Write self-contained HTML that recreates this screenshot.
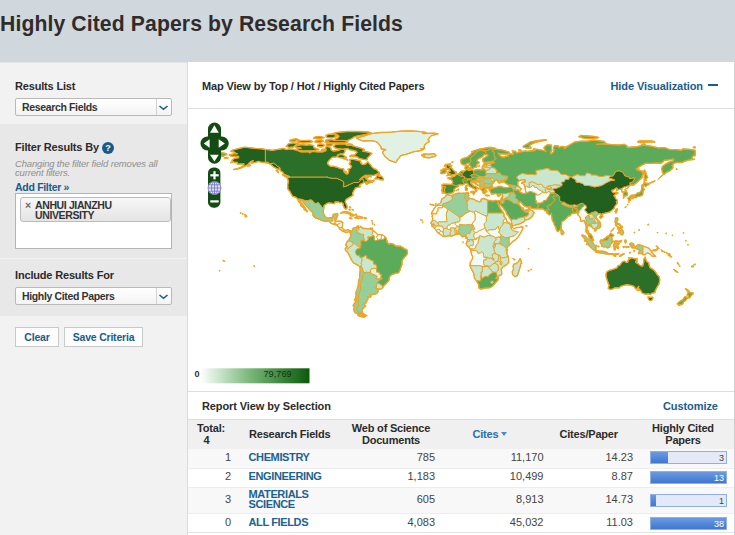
<!DOCTYPE html>
<html><head><meta charset="utf-8">
<style>
*{box-sizing:border-box;margin:0;padding:0}
html,body{width:735px;height:535px;overflow:hidden;background:#f1f1f1;font-family:"Liberation Sans",sans-serif;color:#333}
.abs{position:absolute}
#hdr{left:0;top:0;width:735px;height:62px;background:#d1d8dd}
#title{left:0px;top:11.5px;font-size:21.2px;font-weight:bold;color:#302c2b;white-space:nowrap;letter-spacing:0.1px}
#side{left:0;top:62px;width:187px;height:473px;background:#f2f2f2}
.sec{left:0;width:187px}
.lab{font-size:11px;font-weight:bold;color:#2b2b2b;white-space:nowrap;letter-spacing:-0.17px}
.sel{left:15px;width:157px;height:18px;border:1px solid #b9b9b9;border-radius:2px;background:linear-gradient(#ffffff,#f3f3f3);font-size:10.5px;font-weight:bold;color:#333;line-height:16px;padding-left:6px;white-space:nowrap;letter-spacing:-0.35px}
.sel i{position:absolute;right:0;top:0;width:15px;height:16px;border-left:1px solid #d2d2d2}
.sel svg{position:absolute;right:2px;top:6px}
#panel{left:187px;top:62px;width:548px;height:473px;background:#fff;border-left:1px solid #dadada;border-right:1px solid #cfcfcf}
.hl{left:188px;width:546px;height:1px;background:#dedede}
.b11{font-size:11px;font-weight:bold;white-space:nowrap;letter-spacing:-0.2px}
.blue{color:#1a5c8c}
.btn{top:327px;height:20px;border:1px solid #c9c9c9;background:#fdfdfd;font-size:10.5px;font-weight:bold;color:#1a5c8c;text-align:center;line-height:18px;white-space:nowrap;letter-spacing:-0.2px}
.th{font-size:11px;font-weight:bold;color:#2b2b2b;white-space:nowrap;letter-spacing:-0.2px;line-height:12px;text-align:center}
.fld{left:248.5px;font-size:11px;font-weight:bold;color:#1b6290;white-space:nowrap;letter-spacing:-0.37px;line-height:10px}
.num{font-size:11px;color:#444;white-space:nowrap;text-align:right;width:60px;line-height:12px}
.bar{left:650px;width:77px;height:13px;border:1px solid #8fb0e4;background:#e3e9f6}
.bar b{position:absolute;left:0;top:0;height:11px;background:linear-gradient(#6a9ae2,#3f78cf)}
.bar span{position:absolute;right:2px;top:1px;font-size:9px;line-height:10px}
</style></head><body>
<div id="hdr" class="abs"></div>
<div id="title" class="abs">Highly Cited Papers by Research Fields</div>
<div id="side" class="abs"></div>
<div class="abs" style="left:0;top:62px;width:735px;height:1px;background:#e2e6e9"></div>
<div class="abs sec" style="top:124px;height:192px;background:#e8e8e8"></div>
<div class="abs sec" style="top:258px;height:1px;background:#f3f3f3"></div>
<div class="abs lab" style="left:15px;top:80px">Results List</div>
<div class="abs sel" style="top:98px">Research Fields<i></i><svg width="11" height="6" viewBox="0 0 11 6"><path d="M1.5 1 L5.5 4.3 L9.5 1" fill="none" stroke="#1a5c8c" stroke-width="1.6"/></svg></div>
<div class="abs lab" style="left:15px;top:141px">Filter Results By</div>
<div class="abs" style="left:102px;top:142px;width:12px;height:12px;border-radius:6px;background:#185a8a;color:#fff;font-size:9px;font-weight:bold;text-align:center;line-height:12px">?</div>
<div class="abs" style="left:15px;top:159px;font-size:9.5px;font-style:italic;color:#8f8f8f;line-height:9.3px;white-space:nowrap;letter-spacing:-0.16px">Changing the filter field removes all<br>current filters.</div>
<div class="abs blue" style="left:15px;top:181px;font-size:10.5px;font-weight:bold;white-space:nowrap;letter-spacing:-0.3px">Add Filter »</div>
<div class="abs" style="left:15px;top:193px;width:157px;height:56px;background:#fff;border:1px solid #b4b4b4"></div>
<div class="abs" style="left:20px;top:197px;width:151px;height:25px;border:1px solid #bcbcbc;border-radius:3px;background:linear-gradient(#f7f7f7,#e4e4e4);font-size:10.5px;font-weight:bold;color:#333;line-height:9.6px;padding:3px 0 0 14px;white-space:nowrap;letter-spacing:-0.38px">ANHUI JIANZHU<br>UNIVERSITY<span class="abs" style="left:4px;top:2.5px;color:#6a6a6a;font-size:10.5px;font-weight:bold;letter-spacing:0">×</span></div>
<div class="abs lab" style="left:15px;top:269px">Include Results For</div>
<div class="abs sel" style="top:287px">Highly Cited Papers<i></i><svg width="11" height="6" viewBox="0 0 11 6"><path d="M1.5 1 L5.5 4.3 L9.5 1" fill="none" stroke="#1a5c8c" stroke-width="1.6"/></svg></div>
<div class="abs btn" style="left:15px;width:44px">Clear</div>
<div class="abs btn" style="left:64px;width:79px">Save Criteria</div>

<div id="panel" class="abs"></div>
<div class="abs b11" style="left:202px;top:79.5px;color:#2b2b2b;letter-spacing:-0.15px">Map View by Top / Hot / Highly Cited Papers</div>
<div class="abs b11 blue" style="left:610.5px;top:79.5px;letter-spacing:-0.08px">Hide Visualization</div>
<div class="abs" style="left:707.5px;top:84px;width:10px;height:2px;background:#1a5c8c"></div>
<div class="abs hl" style="top:108px"></div>
<!--MAP--><svg class="abs" style="left:0;top:0" width="735" height="535" viewBox="0 0 735 535"><g stroke="#e8a224" stroke-width="0.95" stroke-linejoin="round"><path fill="#21601f" d="M287.2,177.8L289.2,177.0L289.2,177.0L326.7,177.0L327.3,176.6L327.5,177.4L331.0,178.0L334.2,178.4L336.4,178.1L340.7,180.0L342.4,181.0L343.7,182.0L343.9,185.1L342.9,186.1L343.7,186.8L348.4,185.3L348.3,184.7L349.8,184.3L352.0,183.4L353.8,182.4L358.5,182.4L359.4,181.8L360.5,180.4L361.5,179.2L362.7,179.3L363.4,179.6L363.4,181.3L364.0,182.1L364.5,182.2L362.5,183.3L360.5,184.1L359.5,185.1L359.4,185.7L360.5,186.4L359.7,187.1L358.5,187.2L355.8,187.9L355.1,188.4L354.8,189.6L353.8,190.5L353.6,191.3L352.6,192.9L352.6,193.7L353.1,195.3L351.8,196.1L349.9,197.2L348.2,198.1L346.0,199.6L345.2,201.5L345.5,202.7L346.5,204.6L347.2,206.7L346.9,208.7L345.9,209.2L344.4,207.9L343.1,205.4L343.1,203.8L341.9,202.6L341.3,202.4L339.8,202.8L338.4,201.9L336.4,202.0L334.8,202.0L334.5,203.6L333.0,203.6L331.3,203.1L328.6,202.8L327.3,203.4L325.1,204.6L323.9,205.8L324.0,207.9L321.5,207.2L321.0,205.8L319.6,204.3L318.4,202.8L317.1,202.7L316.1,203.8L314.3,203.0L311.6,200.0L309.3,200.0L309.3,200.7L305.4,200.7L300.5,199.1L297.4,199.1L297.1,198.3L295.7,197.3L294.2,196.7L292.7,196.3L291.0,193.6L290.2,192.0L288.4,189.7L287.6,188.5L287.9,186.7L287.5,185.3L288.2,182.9L288.2,180.6ZM265.4,149.5L262.1,148.8L255.4,148.4L250.7,147.9L244.6,147.2L241.3,147.9L235.9,149.2L231.7,150.4L230.9,151.3L234.6,152.2L235.0,153.0L237.5,153.8L234.6,153.7L229.1,154.9L231.3,156.2L235.9,156.3L238.6,156.3L238.6,157.7L234.6,158.3L232.6,159.7L231.9,160.3L233.3,161.7L234.6,162.5L237.3,162.5L237.3,164.2L242.0,163.9L244.0,163.9L243.3,165.7L240.0,167.7L235.9,169.0L233.5,169.6L237.3,169.0L242.0,167.7L244.6,166.3L248.0,164.6L248.9,163.3L250.7,161.7L253.3,160.7L251.3,163.3L255.4,162.3L258.7,161.3L261.4,162.3L264.7,162.5L267.4,163.0L270.1,164.2L271.4,165.0L272.8,166.3L274.8,167.7L277.5,169.0L278.8,169.3L280.0,168.6L280.1,167.7L277.5,166.3L275.6,164.5L273.4,163.0L270.1,163.8L267.8,162.2L265.4,161.9L265.4,149.5ZM250.4,165.7L247.3,166.1L248.3,165.0L250.0,164.6ZM224.2,157.8L226.6,157.4L228.2,158.1L225.9,158.3ZM231.3,161.9L232.5,162.3L230.6,162.6ZM245.4,217.0L246.7,216.4L246.4,215.5L245.3,215.8ZM244.4,214.6L245.3,214.8L245.0,214.4ZM242.4,213.9L243.0,214.0L242.6,213.5ZM240.4,213.1L240.9,213.2L240.8,212.8Z"/>
<path fill="#2b6f29" d="M265.4,149.5L268.1,149.6L272.1,150.4L276.1,149.6L280.8,149.0L282.8,148.3L286.8,149.6L288.2,149.0L292.2,149.2L297.5,150.3L300.2,151.7L301.6,151.9L306.9,151.8L309.6,151.7L309.6,153.0L312.3,151.3L317.6,151.9L323.0,151.9L324.3,151.0L326.3,151.0L325.7,150.3L325.7,147.0L327.7,146.3L331.0,148.3L331.0,149.6L333.0,151.0L336.4,150.6L339.0,150.3L339.7,149.2L344.4,149.2L345.1,151.0L343.7,153.7L340.4,153.9L337.7,155.0L336.4,157.0L332.4,157.3L329.7,159.7L327.7,162.3L327.7,163.9L330.3,166.3L333.7,166.3L336.4,167.0L340.4,168.6L343.7,168.8L344.0,171.7L345.7,173.7L347.3,174.1L348.4,173.0L348.7,170.4L347.7,169.4L350.4,168.4L351.5,166.3L349.1,163.9L350.4,162.3L349.8,159.3L353.8,159.3L357.8,160.2L360.5,161.0L361.1,163.7L363.1,164.6L365.8,163.9L367.2,162.3L367.7,161.8L370.5,164.7L371.9,167.0L373.9,168.6L376.5,169.7L378.5,171.7L379.5,173.0L377.9,173.8L373.9,175.4L369.8,175.3L365.2,175.4L362.5,177.0L360.5,179.0L359.1,179.8L361.1,178.6L364.5,177.0L367.8,177.0L368.1,177.8L365.8,178.4L367.2,179.7L367.8,180.6L368.8,181.0L371.9,181.4L373.9,180.0L374.1,181.0L372.5,182.1L369.2,182.9L366.5,184.4L365.6,183.3L367.8,182.0L366.5,182.1L364.5,182.2L364.0,182.1L363.4,181.3L363.4,179.6L362.7,179.3L361.5,179.2L360.5,180.4L359.4,181.8L358.5,182.4L353.8,182.4L352.0,183.4L349.8,184.3L348.3,184.7L348.4,185.3L343.7,186.8L342.9,186.1L343.9,185.1L343.7,182.0L342.4,181.0L340.7,180.0L336.4,178.1L334.2,178.4L331.0,178.0L327.5,177.4L327.3,176.6L326.7,177.0L289.2,177.0L289.5,176.6L287.5,175.7L284.1,174.4L282.8,172.4L280.8,171.0L279.7,169.7L280.0,168.6L280.1,167.7L277.5,166.3L275.6,164.5L273.4,163.0L270.1,163.8L267.8,162.2L265.4,161.9L265.4,149.5ZM289.1,177.8L286.2,177.2L282.4,174.8L283.7,174.5L286.6,175.7L288.7,177.2ZM278.5,172.8L276.1,170.4L277.7,170.4L278.1,171.7ZM374.8,178.9L375.9,177.7L377.5,174.8L379.3,173.6L379.9,175.0L378.5,176.0L381.9,176.5L382.6,177.7L383.6,178.9L383.0,180.1L381.2,179.7L379.9,179.8L379.2,178.9ZM367.8,175.8L371.4,176.9L369.8,176.6ZM368.5,180.2L371.2,180.5L370.5,181.0L368.8,180.8ZM371.9,153.4L369.8,155.7L367.2,158.3L367.2,159.8L365.8,159.7L363.1,159.3L359.1,158.3L356.5,156.6L354.4,156.3L350.4,156.6L349.8,156.3L350.4,155.3L355.1,155.0L355.8,153.7L357.1,152.3L355.8,151.0L352.4,150.3L349.1,149.6L348.4,148.6L344.4,149.0L340.4,149.0L337.0,148.6L334.4,147.6L333.7,146.3L335.0,144.7L339.0,143.9L345.7,144.0L346.4,145.2L351.1,145.2L355.1,146.6L358.5,147.4L362.5,148.6L364.5,149.9L362.5,151.0L367.2,151.9L369.8,152.7ZM313.6,150.6L306.9,150.9L302.2,151.0L298.2,150.3L296.9,148.3L301.6,148.2L295.5,147.2L296.2,145.6L301.6,144.6L306.9,145.2L309.6,144.7L313.6,145.6L313.6,147.6L317.6,149.0L319.0,149.6ZM286.2,146.3L289.5,147.5L293.5,147.0L295.5,145.2L298.9,143.9L296.2,143.2L292.2,143.0L288.2,143.9ZM317.6,146.3L321.6,147.0L324.3,145.6L323.6,144.3L319.6,143.9L317.6,145.0ZM326.3,146.0L331.0,145.9L333.0,144.3L331.0,143.6L326.3,143.9ZM321.0,150.3L325.7,150.9L326.3,149.6L323.0,149.1ZM337.7,155.0L341.7,154.3L346.4,157.3L343.1,158.1L339.7,157.7L337.7,157.0ZM325.7,141.6L331.0,142.8L339.0,143.0L347.1,142.7L347.7,141.6L344.4,140.4L335.0,140.4L331.0,139.6L325.7,140.2ZM335.0,140.3L347.1,140.7L351.1,139.0L353.8,137.2L357.8,135.9L365.8,134.6L371.2,132.9L368.5,132.0L357.8,131.5L347.1,131.5L337.7,132.4L332.4,133.6L337.7,135.0L339.0,136.3L337.7,137.9L335.0,139.0ZM327.0,137.6L332.4,137.9L337.0,136.3L333.7,134.0L328.3,134.3L325.7,135.6ZM297.5,142.0L302.9,143.0L309.6,142.6L312.9,141.6L309.6,140.3L304.2,140.6L298.9,140.3ZM314.9,142.0L320.3,142.3L323.6,141.2L321.6,140.0L316.3,140.3ZM289.5,141.0L294.9,141.2L298.9,139.9L296.2,138.8L290.8,139.6ZM313.6,138.3L320.3,138.6L324.3,137.6L320.3,136.6L314.9,137.0ZM325.0,142.3L329.0,142.6L329.0,141.5L325.7,141.4ZM346.4,144.7L351.1,145.1L352.4,144.4L349.1,143.9ZM343.1,158.6L347.1,159.4L345.1,158.5ZM346.7,159.4L348.0,160.1L347.1,160.2ZM344.4,171.6L346.7,172.0L345.7,171.4Z"/>
<path fill="#e1f1e3" d="M395.3,162.5L392.6,161.3L389.3,160.3L387.2,158.3L385.2,156.7L383.9,155.0L382.6,153.0L383.2,151.0L385.9,149.6L381.2,149.0L381.2,147.0L379.9,145.6L378.5,143.6L375.9,141.6L371.2,140.7L363.1,141.0L359.1,139.6L356.5,138.0L363.1,136.3L367.2,135.0L371.2,133.6L380.6,132.5L391.3,132.1L400.6,131.2L411.4,130.8L420.7,131.6L426.1,132.5L422.1,133.5L434.1,133.2L438.1,133.9L431.4,135.6L429.4,137.6L428.1,139.6L429.4,141.6L426.8,143.0L424.7,145.0L424.1,147.0L424.7,148.6L420.7,148.7L423.4,149.6L419.4,151.0L414.0,151.7L410.0,153.0L406.0,154.3L403.3,154.9L400.6,155.7L399.3,157.7L397.3,159.7L396.6,161.7Z"/>
<path fill="#97cf9a" d="M297.4,199.1L300.5,199.1L305.4,200.7L309.3,200.7L309.3,200.0L311.6,200.0L314.3,203.0L316.1,203.8L317.1,202.7L318.4,202.8L319.6,204.3L321.0,205.8L321.5,207.2L324.0,207.9L323.6,209.1L323.2,212.4L323.9,214.4L325.1,216.4L325.9,217.4L327.7,218.2L330.3,217.7L331.7,217.7L332.8,216.4L333.2,214.4L335.7,213.8L337.7,213.8L338.0,214.7L337.0,216.4L336.8,218.1L336.0,217.8L335.3,218.5L334.8,218.7L334.8,218.7L332.4,218.7L332.4,219.5L333.2,221.0L331.4,221.1L330.7,222.1L330.7,223.1L329.0,221.4L327.3,220.9L325.0,221.5L322.3,220.7L320.3,219.9L317.9,218.7L315.6,218.1L313.6,216.4L312.9,215.1L313.2,213.8L312.3,212.2L310.3,210.2L308.5,208.7L307.7,207.1L306.2,205.8L304.9,204.4L303.6,202.8L302.5,200.8L300.6,200.1L300.6,201.8L302.2,203.8L303.6,205.8L305.2,207.8L306.2,209.8L307.6,211.5L306.9,211.9L305.6,210.4L304.0,209.4L303.8,207.8L301.8,206.7L300.5,205.4L301.3,204.4L299.5,202.7L298.5,201.1L297.4,199.1Z"/>
<path fill="#e1f1e3" d="M330.7,223.1L332.4,223.9L333.6,224.1L334.5,223.3L334.8,222.5L336.1,221.5L335.2,221.3L334.8,218.7L332.4,218.7L332.4,219.5L333.2,221.0L331.4,221.1L330.7,222.1Z"/>
<path fill="#ffffff" d="M334.8,218.7L335.3,218.5L336.0,217.8L336.2,219.1L335.2,221.3Z"/>
<path fill="#ffffff" d="M333.6,224.1L335.7,224.9L336.8,224.9L336.6,223.9L334.5,223.3Z"/>
<path fill="#ffffff" d="M334.5,223.3L336.6,223.9L336.8,224.9L337.3,225.1L338.1,224.1L339.7,223.8L340.8,222.7L342.8,222.5L341.1,221.3L339.0,221.1L337.0,221.4L336.1,221.5L334.8,222.5Z"/>
<path fill="#ffffff" d="M337.3,225.1L338.1,224.1L339.7,223.8L340.8,222.7L342.8,222.5L342.4,225.1L342.1,227.8L339.4,227.7L336.8,225.3Z"/>
<path fill="#e1f1e3" d="M339.4,227.7L342.1,227.8L343.6,229.7L343.1,231.4L342.1,231.0L340.4,229.5L339.3,228.9Z"/>
<path fill="#e1f1e3" d="M343.6,229.7L345.7,230.7L347.7,229.7L350.6,230.9L349.9,232.9L348.7,231.4L346.7,232.7L345.1,232.2L343.1,231.4Z"/>
<path fill="#e1f1e3" d="M340.5,213.2L343.1,211.8L346.4,211.5L349.8,212.7L352.7,214.4L354.8,215.4L353.1,215.9L350.2,215.9L350.8,214.8L349.1,213.8L345.7,213.0L343.7,212.3L341.7,213.1Z"/>
<path fill="#ffffff" d="M349.4,217.9L352.0,218.2L352.0,218.6L350.0,218.7Z"/>
<path fill="#ffffff" d="M354.6,217.7L356.5,218.2L358.1,218.5L358.2,216.2L356.1,215.9L357.1,217.1Z"/>
<path fill="#ffffff" d="M358.1,218.5L359.8,218.1L362.5,218.1L362.7,217.4L360.7,216.6L358.2,216.2Z"/>
<path fill="#ffffff" d="M364.2,218.5L366.2,218.5L366.2,217.8L364.2,217.8Z"/>
<path fill="#ffffff" d="M349.4,207.0L350.0,207.1L350.8,207.8L349.9,206.7ZM349.5,209.0L350.2,210.0L349.9,210.4L349.2,209.5ZM352.0,209.4L353.1,210.2L353.4,210.0ZM355.5,214.3L356.3,214.4L356.1,214.0Z"/>
<path fill="#ffffff" d="M371.4,229.0L372.5,229.0L372.5,228.1L371.6,228.2Z"/>
<path fill="#ffffff" d="M371.6,220.7L372.3,220.9L371.9,221.1ZM372.3,222.7L372.7,223.1L372.5,222.6ZM372.4,223.9L372.7,224.2L372.5,223.7ZM374.4,224.9L374.7,225.0L374.5,224.7Z"/>
<path fill="#97cf9a" d="M350.6,230.9L351.4,231.8L352.4,230.1L353.1,228.3L354.0,227.7L356.1,227.4L357.5,226.2L358.7,225.9L357.4,227.5L356.5,229.8L357.4,231.1L357.4,232.9L359.8,233.1L361.3,234.4L363.8,234.2L363.4,236.8L364.1,238.8L364.5,240.9L360.7,240.2L361.4,241.7L360.5,242.2L361.1,243.8L360.5,248.1L359.8,247.6L357.1,245.6L354.4,243.6L353.4,242.6L351.8,242.1L350.0,241.4L348.7,240.6L349.1,239.2L350.4,237.2L350.7,235.2L350.4,233.4L349.9,232.9Z"/>
<path fill="#c9e7ce" d="M364.5,240.9L364.1,238.8L363.4,236.8L363.8,234.2L361.3,234.4L359.8,233.1L357.4,232.9L357.4,231.1L356.5,229.8L357.4,227.5L358.7,225.9L358.3,227.8L359.1,229.8L358.3,230.2L357.9,228.5L359.1,227.5L360.2,227.0L360.7,226.2L361.1,227.1L362.9,227.8L363.1,228.5L365.8,228.3L367.8,229.0L370.5,228.2L370.1,229.1L372.5,229.8L372.8,231.0L373.9,231.1L372.5,232.1L373.2,233.1L372.1,234.5L372.9,235.6L371.9,236.5L369.8,237.2L367.8,237.0L368.5,239.2L366.5,241.2L365.4,241.4L364.5,240.9Z"/>
<path fill="#ffffff" d="M372.9,235.6L372.1,234.5L373.2,233.1L372.5,232.1L373.9,231.1L374.1,231.4L375.9,232.7L377.6,234.6L377.5,235.4L376.5,237.2L377.5,238.1L377.9,240.0L375.5,240.8L374.0,239.4L374.4,237.8L374.1,236.8L374.0,235.8L372.9,235.6Z"/>
<path fill="#ffffff" d="M377.9,240.0L377.5,238.1L376.5,237.2L377.5,235.4L377.6,234.6L379.5,234.6L381.9,234.9L381.2,237.8L381.6,239.6L380.6,239.2L379.2,240.0L377.9,240.0Z"/>
<path fill="#ffffff" d="M381.6,239.6L381.2,237.8L381.9,234.9L383.5,235.4L385.0,237.0L383.4,239.6L381.6,239.6Z"/>
<path fill="#c9e7ce" d="M348.7,240.6L350.0,241.4L351.8,242.1L353.4,242.6L353.1,244.5L351.5,246.0L349.5,247.0L348.8,248.6L347.7,249.2L346.7,248.4L346.7,247.0L347.3,246.2L345.9,245.6L346.0,243.8L346.9,242.5L347.1,241.4Z"/>
<path fill="#c9e7ce" d="M346.7,247.0L346.7,248.4L347.7,249.2L348.8,248.6L349.5,247.0L351.5,246.0L353.1,244.5L353.4,242.6L354.4,243.6L357.1,245.6L359.8,247.6L360.5,248.1L356.7,249.2L355.4,251.9L356.5,254.8L357.4,255.6L359.7,255.2L359.7,257.2L361.0,257.2L362.2,259.2L361.8,261.9L361.1,263.2L361.8,264.5L361.0,265.9L359.9,267.0L358.5,265.6L355.8,264.3L353.5,262.9L352.0,260.9L350.8,258.5L349.5,255.9L348.4,253.5L347.2,251.6L345.5,250.5L345.3,248.5L346.7,247.0Z"/>
<path fill="#c9e7ce" d="M361.0,265.9L361.8,264.5L361.1,263.2L361.8,261.9L362.2,259.2L361.0,257.2L362.5,257.2L365.2,255.7L366.8,255.6L366.8,258.1L369.8,259.3L371.2,260.1L373.2,260.8L373.6,264.1L376.0,264.3L376.1,265.6L377.1,266.5L376.8,267.9L376.3,269.0L375.1,268.3L371.4,268.7L370.8,269.9L370.2,272.2L368.1,273.0L366.9,272.0L364.2,273.0L362.9,271.0L362.5,268.6L361.1,265.9Z"/>
<path fill="#e1f1e3" d="M370.2,272.2L370.8,269.9L371.4,268.7L375.1,268.3L376.3,269.0L376.8,270.2L376.7,272.0L379.5,272.3L380.0,274.6L381.5,274.6L381.1,276.7L381.0,278.0L379.2,279.0L375.7,278.8L377.1,276.6L375.2,275.2L372.5,274.3L370.2,272.2Z"/>
<path fill="#c9e7ce" d="M376.0,287.8L376.3,285.9L377.1,282.8L379.2,283.6L381.2,284.6L382.7,286.3L382.7,287.6L381.9,288.6L380.6,289.1L378.5,289.0L376.8,288.5Z"/>
<path fill="#97cf9a" d="M364.2,273.0L366.9,272.0L368.1,273.0L370.2,272.2L372.5,274.3L375.2,275.2L377.1,276.6L375.7,278.8L379.2,279.0L381.0,278.0L381.1,276.7L382.2,278.2L382.3,278.8L379.6,280.3L377.1,282.8L376.3,285.9L376.0,287.8L375.9,288.3L377.6,289.9L378.3,291.3L376.9,293.5L372.5,294.6L370.9,294.3L370.8,297.0L367.2,297.0L368.1,299.0L366.8,300.6L366.5,302.6L363.8,304.0L365.8,306.0L363.8,308.0L361.8,310.0L362.6,312.4L357.8,312.0L357.4,310.6L356.7,308.6L358.5,305.3L358.2,302.0L358.1,298.6L358.9,294.6L359.8,291.3L360.7,288.2L359.8,285.3L360.7,282.6L362.5,278.6L362.6,275.2L364.2,273.0ZM362.3,312.9L362.3,315.8L365.2,316.0L366.9,315.6L364.5,314.4L362.9,313.2Z"/>
<path fill="#97cf9a" d="M361.1,265.9L359.9,267.0L360.2,269.9L359.7,273.9L359.8,277.2L358.5,281.2L358.3,285.3L357.0,289.9L355.8,292.2L356.1,295.3L355.4,298.3L356.7,298.6L355.8,301.3L354.4,303.3L353.1,305.3L354.4,307.3L353.4,310.0L355.1,312.6L358.5,314.4L359.3,313.3L360.5,312.6L362.6,312.4L357.8,312.0L357.4,310.6L356.7,308.6L358.5,305.3L358.2,302.0L358.1,298.6L358.9,294.6L359.8,291.3L360.7,288.2L359.8,285.3L360.7,282.6L362.5,278.6L362.6,275.2L364.2,273.0L362.9,271.0L362.5,268.6L361.1,265.9ZM362.3,312.9L360.1,313.0L359.8,314.6L357.8,315.3L360.5,316.4L362.3,315.8ZM355.1,298.5L355.8,298.3L355.6,300.5L354.6,300.2ZM363.4,316.2L364.5,317.2L361.5,316.8Z"/>
<path fill="#5bab5b" d="M385.0,237.0L383.4,239.6L381.6,239.6L380.6,239.2L379.2,240.0L377.9,240.0L375.5,240.8L374.0,239.4L374.4,237.8L374.1,236.8L374.0,235.8L372.9,235.6L371.9,236.5L369.8,237.2L367.8,237.0L368.5,239.2L366.5,241.2L365.4,241.4L364.5,240.9L360.7,240.2L361.4,241.7L360.5,242.2L361.1,243.8L360.5,248.1L356.7,249.2L355.4,251.9L356.5,254.8L357.4,255.6L359.7,255.2L359.7,257.2L361.0,257.2L362.5,257.2L365.2,255.7L366.8,255.6L366.8,258.1L369.8,259.3L371.2,260.1L373.2,260.8L373.6,264.1L376.0,264.3L376.1,265.6L377.1,266.5L376.8,267.9L376.3,269.0L376.8,270.2L376.7,272.0L379.5,272.3L380.0,274.6L381.5,274.6L381.1,276.7L382.2,278.2L382.3,278.8L379.6,280.3L377.1,282.8L379.2,283.6L381.2,284.6L382.7,286.3L382.7,287.6L384.3,285.3L386.6,283.2L388.9,280.6L389.3,277.9L389.9,276.2L391.9,274.6L393.9,273.9L396.0,273.2L398.0,273.1L399.3,271.9L400.2,269.6L401.0,266.9L402.0,264.5L402.0,261.2L402.6,259.9L404.3,257.5L406.0,255.9L407.3,253.9L407.6,252.1L406.9,249.6L404.7,248.9L402.6,247.4L400.6,246.2L398.0,246.2L395.3,245.8L394.5,244.8L392.6,243.8L389.9,243.4L389.3,244.5L387.9,242.8L386.8,242.1L387.2,241.2L386.6,239.8L385.9,237.8L385.0,237.0Z"/>
<path fill="#c9e7ce" d="M421.4,155.0L424.1,153.8L427.4,154.2L430.1,154.1L432.8,153.7L434.8,153.9L436.1,155.7L434.1,156.6L429.4,157.8L426.8,157.7L423.8,157.3L424.7,156.3L422.1,155.8L424.7,155.3Z"/>
<path fill="#2b6f29" d="M446.6,175.7L449.5,175.4L452.2,174.8L456.1,174.2L455.5,173.3L456.5,172.1L454.6,171.7L454.2,170.9L452.6,169.6L452.1,168.4L450.9,167.7L449.8,167.7L451.4,166.2L451.8,165.5L449.5,165.4L448.6,165.7L450.2,164.2L447.5,164.2L446.4,165.7L445.9,166.7L446.6,168.6L447.8,168.4L447.6,169.4L449.5,169.2L449.9,170.4L450.2,171.2L448.2,171.3L448.4,172.0L448.7,172.6L447.2,173.2L449.9,173.8L450.6,173.7L448.6,174.1ZM443.5,169.7L444.4,168.8L446.2,168.8L446.8,169.7L445.9,170.4L444.2,170.2ZM444.4,166.1L445.9,165.9L445.8,164.3L444.8,165.0ZM452.1,162.3L452.9,162.1L452.6,161.4L452.1,161.8ZM449.8,163.8L450.6,163.7L450.0,163.4Z"/>
<path fill="#5bab5b" d="M440.8,173.6L442.8,173.7L445.6,172.8L446.2,171.7L445.9,170.4L444.2,170.2L443.5,169.7L444.4,168.8L442.8,169.0L442.8,170.0L440.8,170.1L441.5,171.3L440.8,172.4Z"/>
<path fill="#3f8f40" d="M447.8,177.8L450.2,177.3L452.1,177.6L451.8,176.1L454.5,176.4L456.3,174.5L457.5,174.2L459.8,175.7L462.0,176.4L462.8,176.4L465.2,177.0L464.4,178.9L463.6,179.2L462.4,180.2L462.2,180.8L463.6,181.2L463.0,182.2L464.5,183.6L464.2,184.0L462.5,184.9L460.6,184.5L458.4,184.9L458.5,185.9L455.1,185.5L451.8,184.5L452.6,182.8L452.7,181.6L451.3,179.6L448.3,178.6ZM465.7,185.9L466.8,185.1L466.9,186.4L466.5,187.2L465.8,186.7Z"/>
<path fill="#3f8f40" d="M451.8,184.5L455.1,185.5L458.5,185.9L458.5,186.5L455.4,188.0L453.8,189.9L454.5,190.7L453.3,192.3L451.4,193.3L448.2,193.5L446.7,194.4L445.8,193.3L444.3,192.8L444.8,191.5L444.4,189.7L445.0,187.7L445.9,186.9L445.4,186.5L443.2,186.4L442.3,186.5L441.7,185.1L443.5,184.1L446.8,184.3L449.5,184.4ZM457.4,189.7L458.5,189.2L458.6,189.9L457.9,190.0ZM455.9,190.5L456.3,190.3L456.2,190.7ZM430.1,204.2L430.4,204.4L430.2,203.9ZM431.6,204.7L432.5,204.4L432.1,205.1ZM433.0,205.0L433.6,205.4L433.6,204.8ZM435.1,205.1L435.6,204.2L436.1,203.5L435.6,204.7Z"/>
<path fill="#5bab5b" d="M442.3,186.5L443.2,186.4L445.4,186.5L445.9,186.9L445.0,187.7L444.4,189.7L444.8,191.5L444.3,192.8L442.3,193.1L442.4,191.1L441.5,190.7L442.3,188.8Z"/>
<path fill="#3f8f40" d="M457.5,174.2L458.8,173.8L460.0,173.8L460.9,173.7L462.0,174.1L462.2,174.6L462.8,175.3L462.4,175.6L462.8,176.4L462.0,176.4L459.8,175.7Z"/>
<path fill="#3f8f40" d="M458.8,173.8L459.6,173.0L460.5,171.7L461.6,171.2L463.4,171.2L463.8,171.4L463.6,172.6L462.2,173.2L462.2,174.6L462.0,174.1L460.9,173.7L460.0,173.8Z"/>
<path fill="#2b6f29" d="M462.2,174.6L462.2,173.2L463.6,172.6L463.8,171.4L463.4,171.2L464.9,170.8L465.7,170.4L465.7,169.2L467.5,169.3L467.6,169.8L468.9,169.8L468.9,170.4L470.9,169.8L472.3,169.7L473.2,170.5L473.5,171.3L473.9,172.9L474.3,174.4L473.3,174.4L470.7,175.3L470.9,175.8L472.7,177.3L471.6,178.0L471.6,179.0L470.3,178.9L468.3,179.0L467.1,179.0L464.4,178.9L465.2,177.0L462.8,176.4L462.4,175.6L462.8,175.3Z"/>
<path fill="#3f8f40" d="M462.2,180.8L463.6,181.2L464.9,181.0L466.3,181.3L468.1,180.2L468.3,179.8L467.1,179.0L464.4,178.9L463.6,179.2L462.4,180.2Z"/>
<path fill="#5bab5b" d="M467.1,179.0L468.3,179.0L470.3,178.9L471.6,179.0L471.6,178.0L472.7,177.3L474.3,177.0L477.0,177.6L477.1,178.4L476.3,179.7L475.6,180.1L473.6,180.5L472.5,180.4L470.8,180.1L468.3,179.8Z"/>
<path fill="#3f8f40" d="M464.2,184.0L464.5,183.6L463.0,182.2L463.6,181.2L464.9,181.0L466.3,181.3L468.1,180.2L468.3,179.8L470.8,180.1L472.5,180.4L472.7,181.6L470.7,182.0L470.8,183.4L472.4,184.4L473.2,185.9L475.6,186.5L479.0,188.9L477.0,188.4L476.4,189.5L477.1,190.4L475.8,191.9L475.2,191.5L475.9,190.4L475.1,189.1L473.6,188.3L471.6,187.5L470.5,186.7L468.9,185.9L468.3,185.1L467.7,183.7L466.0,183.2L464.9,183.8ZM470.8,191.7L472.0,191.5L475.1,191.3L474.4,193.5L470.9,192.3ZM465.2,187.7L466.5,187.5L467.3,188.4L467.1,190.1L466.1,190.5L465.4,190.1L465.4,188.4Z"/>
<path fill="#5bab5b" d="M465.7,169.2L465.0,168.4L465.2,166.6L465.7,166.2L468.4,165.4L468.0,167.0L468.8,167.4L467.5,168.6L467.5,169.3ZM469.1,168.1L470.9,167.7L471.1,168.5L470.3,169.2L468.9,168.8ZM467.3,168.4L468.7,168.4L468.5,168.9L467.6,168.9Z"/>
<path fill="#5bab5b" d="M463.6,165.0L461.6,163.9L460.9,162.3L460.9,160.3L461.2,159.4L463.6,158.3L465.6,157.7L467.6,157.0L468.9,155.8L470.9,154.3L471.6,153.0L473.6,151.9L471.6,151.7L475.0,150.6L477.6,149.6L479.6,149.0L483.0,148.6L485.7,147.9L488.7,147.4L491.7,147.5L495.7,148.4L494.4,149.4L495.4,149.2L493.0,150.3L491.7,149.0L489.0,149.1L488.6,150.3L485.7,150.7L481.8,150.2L478.4,151.0L476.3,151.9L475.0,154.1L473.6,155.3L472.5,156.3L470.5,157.7L470.5,160.1L471.3,160.6L470.5,161.7L470.0,162.6L469.5,163.7L468.9,163.5L468.4,163.0L466.9,163.9L465.2,164.9Z"/>
<path fill="#5bab5b" d="M469.5,163.7L469.2,164.6L470.1,165.5L471.1,167.3L471.6,168.5L473.3,168.4L473.7,167.6L475.6,167.4L476.3,166.3L476.7,164.6L478.3,163.7L479.4,162.6L478.7,161.7L477.2,161.4L477.4,159.7L479.0,158.3L481.6,157.3L483.0,156.2L484.1,154.7L486.5,154.6L485.9,153.7L486.1,152.3L485.0,151.4L481.8,150.2L478.4,151.0L476.3,151.9L475.0,154.1L473.6,155.3L472.5,156.3L470.5,157.7L470.5,160.1L471.3,160.6L470.5,161.7L470.0,162.6L469.5,163.7ZM478.6,166.3L479.6,165.1L479.4,165.9ZM476.2,167.4L477.1,165.9L476.6,166.9Z"/>
<path fill="#5bab5b" d="M486.5,154.6L488.1,155.5L487.0,156.3L484.3,157.8L482.7,159.0L483.0,161.0L482.7,161.5L484.9,162.5L487.7,162.1L491.4,161.7L493.4,160.6L496.4,158.5L494.4,157.3L494.4,155.9L494.0,154.3L494.4,152.1L492.4,151.4L492.4,150.4L493.0,150.3L491.7,149.0L489.0,149.1L488.6,150.3L485.7,150.7L481.8,150.2L485.0,151.4L486.1,152.3L485.9,153.7Z"/>
<path fill="#c9e7ce" d="M485.7,163.4L487.0,163.0L491.7,163.0L490.9,163.9L491.0,165.7L489.7,165.5L487.7,165.0L486.7,165.1L487.0,164.5L485.7,164.1ZM483.7,164.2L485.3,164.2L484.5,165.0L483.5,164.6ZM483.9,163.7L485.0,163.7L484.5,163.9Z"/>
<path fill="#c9e7ce" d="M486.7,165.1L487.7,165.0L489.7,165.5L491.0,165.7L492.0,167.4L489.8,168.1L487.7,167.3L483.7,167.1L482.3,167.6L482.3,166.3L483.3,165.5L484.5,165.4L485.3,166.3L486.3,166.2Z"/>
<path fill="#c9e7ce" d="M482.3,167.6L483.7,167.1L487.7,167.3L489.8,168.1L489.8,168.8L488.6,170.0L486.3,170.5L485.7,170.4L484.7,169.8L484.6,169.2L482.6,168.6Z"/>
<path fill="#5bab5b" d="M473.2,170.5L476.3,169.7L479.0,169.3L480.6,169.8L484.7,169.8L485.7,170.4L486.2,172.1L485.8,173.0L485.8,173.6L486.5,174.6L484.6,176.8L484.3,176.9L482.3,176.5L480.3,176.5L479.4,176.4L477.0,175.3L475.6,174.9L474.3,174.4L473.9,172.9L473.5,171.3Z"/>
<path fill="#5bab5b" d="M470.7,175.3L473.3,174.4L474.3,174.4L475.6,174.9L477.0,175.3L479.4,176.4L477.0,177.6L474.3,177.0L472.7,177.3L470.9,175.8Z"/>
<path fill="#97cf9a" d="M477.0,177.6L479.4,176.4L480.3,176.5L482.3,176.5L484.3,176.9L483.8,177.8L481.6,177.7L479.4,178.6L477.1,178.4Z"/>
<path fill="#97cf9a" d="M475.6,180.1L476.3,179.7L477.1,178.4L479.4,178.6L481.6,177.7L483.8,177.8L484.9,178.4L482.6,180.6L481.4,180.9L479.4,181.2L477.0,181.0L476.2,180.4Z"/>
<path fill="#97cf9a" d="M484.9,178.4L487.0,178.5L489.8,178.0L492.0,180.4L492.0,181.7L494.0,182.0L492.5,184.1L490.4,183.6L488.3,184.1L484.6,183.4L484.3,182.8L482.9,182.6L481.4,180.9L482.6,180.6Z"/>
<path fill="#e1f1e3" d="M489.8,178.0L491.7,178.0L493.3,178.5L494.5,180.5L492.0,181.7L492.0,180.4Z"/>
<path fill="#97cf9a" d="M484.6,183.4L488.3,184.1L490.4,183.6L492.5,184.1L491.7,186.4L489.5,186.8L489.0,187.3L487.0,187.2L485.0,187.3L484.2,186.0L484.3,184.8Z"/>
<path fill="#5bab5b" d="M481.0,189.5L482.3,188.0L485.0,187.3L487.0,187.2L489.0,187.3L489.5,186.8L489.0,188.0L486.3,188.0L486.7,188.9L484.9,188.5L484.5,189.7L485.4,190.5L486.3,191.5L486.3,192.1L485.3,191.9L485.3,192.7L484.7,193.7L484.2,193.9L483.3,193.3L482.7,192.0L484.3,191.5L482.5,191.3L481.9,190.5ZM485.7,195.1L487.0,195.2L489.4,195.5L487.4,195.9L485.7,195.5ZM491.3,194.1L492.0,193.9L491.7,194.5ZM489.0,190.0L489.8,190.3L489.3,190.5ZM485.5,190.5L486.6,190.9L487.0,191.7L485.7,190.9Z"/>
<path fill="#c9e7ce" d="M480.2,186.5L480.0,188.5L481.0,189.5L482.3,188.0L481.6,186.7L481.0,185.6Z"/>
<path fill="#c9e7ce" d="M481.6,186.7L482.3,188.0L485.0,187.3L484.2,186.0L483.0,186.0Z"/>
<path fill="#5bab5b" d="M472.5,180.4L472.7,181.6L474.6,181.7L476.2,180.4L475.6,180.1L473.6,180.5Z"/>
<path fill="#97cf9a" d="M472.3,181.7L472.7,181.6L474.6,181.7L476.2,180.4L477.0,181.0L479.4,181.2L479.6,182.5L477.0,182.1L475.4,182.1L475.9,183.4L477.6,184.8L479.0,185.9L476.3,184.4L474.6,183.4L473.6,182.1L472.8,182.6Z"/>
<path fill="#c9e7ce" d="M475.4,182.1L477.0,182.1L479.6,182.5L480.2,183.7L479.9,184.4L479.0,185.6L479.0,185.9L477.6,184.8L475.9,183.4Z"/>
<path fill="#c9e7ce" d="M479.0,185.9L479.0,185.6L479.9,184.4L481.4,185.3L481.0,185.6L480.2,186.5Z"/>
<path fill="#97cf9a" d="M479.6,182.5L479.4,181.2L481.4,180.9L482.9,182.6L484.3,182.8L484.6,183.4L484.3,184.8L484.2,186.0L483.0,186.0L481.6,186.7L481.0,185.6L481.4,185.3L479.9,184.4L480.2,183.7Z"/>
<path fill="#c9e7ce" d="M485.7,170.4L486.3,170.5L488.6,170.0L489.8,168.8L489.8,168.1L492.0,167.4L495.6,168.2L495.4,169.3L497.7,171.0L496.4,171.6L496.8,172.9L495.2,173.8L491.0,173.7L485.8,173.6L485.8,173.0L486.2,172.1Z"/>
<path fill="#97cf9a" d="M483.8,177.8L484.3,176.9L484.6,176.8L486.5,174.6L485.8,173.6L491.0,173.7L495.2,173.8L496.8,172.9L499.5,172.5L501.7,175.2L505.1,175.8L507.9,176.2L507.5,178.5L505.3,179.6L503.1,180.1L501.1,180.8L501.3,181.7L503.2,181.8L501.1,182.4L499.1,183.2L497.7,181.8L499.2,180.9L496.8,180.2L495.3,180.4L494.0,182.0L492.0,181.7L494.5,180.5L493.3,178.5L491.7,178.0L489.8,178.0L487.0,178.5L484.9,178.4Z"/>
<path fill="#97cf9a" d="M497.4,195.7L498.4,195.2L500.5,194.8L499.7,195.7L498.4,196.3Z"/>
<path fill="#ffffff" d="M473.3,194.4L473.7,194.5L473.5,194.7Z"/>
<path fill="#5bab5b" d="M489.5,186.8L491.7,186.4L493.0,187.5L491.0,187.7L489.3,188.7L489.0,188.0ZM489.3,189.1L489.1,189.7L490.1,191.1L490.8,193.1L492.1,193.5L493.7,194.1L495.2,193.3L497.7,194.3L499.7,194.0L502.1,193.6L502.4,194.5L503.3,194.0L503.7,193.5L506.4,193.5L509.1,192.9L510.8,192.8L514.2,192.8L513.1,189.9L514.2,189.5L512.7,188.9L512.4,187.6L511.1,187.1L509.8,187.1L507.4,187.7L503.7,187.5L501.1,186.4L498.4,186.4L496.1,187.5L493.3,187.5L493.7,188.1L491.0,188.5Z"/>
<path fill="#c9e7ce" d="M446.3,194.7L447.1,194.5L451.3,195.6L451.9,196.4L452.6,199.1L450.2,201.1L449.4,201.4L446.8,202.7L442.6,204.2L442.6,205.5L436.5,205.5L438.8,204.0L440.8,202.7L441.2,201.1L441.7,199.1L444.2,197.6L445.5,196.7Z"/>
<path fill="#f3f9f3" d="M436.5,205.5L442.6,205.5L442.6,207.8L438.1,207.8L438.1,211.2L436.8,211.8L436.8,214.0L431.4,214.0L431.6,213.1L432.8,210.7L434.2,208.4L434.9,207.4Z"/>
<path fill="#97cf9a" d="M451.3,195.6L454.2,194.5L456.2,193.7L458.2,193.2L461.6,193.3L464.2,193.1L465.7,193.2L465.3,195.7L464.2,197.1L465.3,198.4L466.3,199.7L466.9,202.2L467.5,205.1L467.3,207.1L467.6,209.8L470.1,211.1L464.2,214.6L462.2,216.4L459.8,216.8L458.6,217.1L458.2,215.9L456.6,215.1L447.8,209.1L442.6,206.0L442.6,204.2L446.8,202.7L449.4,201.4L450.2,201.1L452.6,199.1L451.9,196.4Z"/>
<path fill="#97cf9a" d="M465.7,193.2L467.3,192.7L468.9,193.1L468.3,194.4L468.9,195.7L467.7,196.7L469.1,198.0L469.6,198.1L469.6,199.2L468.0,200.0L467.6,201.8L466.9,202.2L466.3,199.7L465.3,198.4L464.2,197.1L465.3,195.7Z"/>
<path fill="#c9e7ce" d="M469.6,198.1L470.9,198.7L474.6,199.3L475.2,200.5L477.6,201.2L479.6,202.0L481.0,201.1L481.1,199.3L483.0,198.5L485.1,198.9L487.8,200.3L487.7,203.5L487.7,213.1L487.7,215.8L486.3,215.8L486.3,216.4L475.6,211.1L474.3,211.8L473.2,212.3L470.1,211.1L467.6,209.8L467.3,207.1L467.5,205.1L466.9,202.2L467.6,201.8L468.0,200.0L469.6,199.2Z"/>
<path fill="#5bab5b" d="M487.8,200.3L490.4,200.5L493.0,201.2L495.7,200.4L497.4,200.8L500.1,200.7L500.9,203.1L500.1,205.4L499.1,204.4L497.9,202.6L497.9,203.8L499.1,205.8L500.4,208.4L502.0,210.6L503.6,213.1L496.4,213.1L487.7,213.1L487.7,203.5Z"/>
<path fill="#c9e7ce" d="M487.7,213.1L503.6,213.1L504.1,214.4L504.0,216.4L505.9,218.5L503.7,219.8L503.1,222.5L503.1,223.4L502.7,225.4L501.3,226.5L500.0,228.1L499.6,229.5L498.4,228.9L498.5,226.5L497.6,226.5L495.7,229.4L491.7,229.9L489.7,229.8L487.4,230.7L485.8,230.7L485.7,229.1L484.9,227.8L484.3,225.4L483.8,224.1L484.3,223.5L486.3,221.5L486.3,216.4L486.3,215.8L487.7,215.8Z"/>
<path fill="#f3f9f3" d="M485.8,230.7L487.4,230.7L489.7,229.8L491.7,229.9L495.7,229.4L497.6,226.5L498.5,226.5L498.4,228.9L499.6,229.5L499.9,231.1L498.4,231.9L499.7,233.4L501.5,235.3L499.7,236.9L495.7,237.6L495.4,237.8L493.7,236.5L491.0,235.8L489.5,234.5L488.1,232.7L487.0,231.8Z"/>
<path fill="#f3f9f3" d="M505.9,218.5L507.1,221.8L509.4,223.1L511.9,225.5L511.0,225.8L508.8,223.5L506.4,222.9L504.9,222.6L503.1,223.4L503.1,222.5L503.7,219.8Z"/>
<path fill="#e1f1e3" d="M511.9,225.5L512.2,227.1L511.5,227.8L510.2,227.8L511.0,225.8Z"/>
<path fill="#c9e7ce" d="M503.1,223.4L504.9,222.6L506.4,222.9L508.8,223.5L511.0,225.8L510.2,227.8L511.5,227.8L511.8,229.8L513.1,230.5L517.1,231.8L518.5,231.8L514.5,235.8L511.8,236.5L510.4,236.9L509.1,237.3L507.1,237.8L505.1,237.7L502.4,236.6L501.5,235.3L499.7,233.4L498.4,231.9L499.9,231.1L499.6,229.5L500.0,228.1L501.3,226.5L502.7,225.4Z"/>
<path fill="#f3f9f3" d="M512.2,227.1L513.8,228.6L517.1,227.5L519.8,227.4L522.6,226.6L522.9,228.5L522.2,229.9L520.9,232.5L518.5,236.5L515.8,239.6L513.1,241.2L510.4,243.8L509.9,244.8L509.1,243.6L509.1,238.8L509.1,237.3L510.4,236.9L511.8,236.5L514.5,235.8L518.5,231.8L517.1,231.8L513.1,230.5L511.8,229.8L511.5,227.8Z"/>
<path fill="#97cf9a" d="M499.7,236.9L501.5,235.3L502.4,236.6L505.1,237.7L507.1,237.8L509.1,237.3L509.1,238.8L509.1,243.6L509.9,244.8L508.0,246.1L506.7,248.8L504.7,247.2L504.5,246.5L499.7,243.8L499.6,242.4L500.4,240.9L501.1,240.1Z"/>
<path fill="#c9e7ce" d="M495.7,237.6L499.7,236.9L501.1,240.1L500.4,240.9L499.6,242.4L499.7,243.8L495.0,243.8L493.8,244.4L494.0,242.5L494.4,241.2L496.1,239.6L495.4,237.8Z"/>
<path fill="#c9e7ce" d="M499.7,243.8L504.5,246.5L504.7,247.2L506.7,248.8L506.2,250.5L507.1,251.9L506.8,253.9L508.3,256.4L505.1,257.6L501.1,258.0L500.4,257.2L499.7,255.2L498.3,255.1L495.7,254.0L495.4,253.5L494.4,251.2L493.6,248.5L495.0,247.2L495.4,245.7L495.0,243.8ZM506.7,250.2L507.2,250.8L506.8,251.1ZM507.4,249.2L507.6,249.6L507.4,249.7Z"/>
<path fill="#c9e7ce" d="M493.8,244.4L495.0,243.8L495.4,245.7L493.0,246.1L493.3,244.8Z"/>
<path fill="#e1f1e3" d="M493.0,246.1L495.4,245.7L495.0,247.2L493.6,248.5L493.3,247.2Z"/>
<path fill="#c9e7ce" d="M470.5,250.2L470.9,249.2L471.6,248.6L473.5,248.9L475.5,247.8L475.9,245.2L478.0,243.2L478.2,241.2L479.1,237.8L479.1,235.8L480.3,235.7L484.2,237.0L488.1,235.4L491.0,235.8L493.7,236.5L495.4,237.8L496.1,239.6L494.4,241.2L494.0,242.5L493.8,244.4L493.3,244.8L493.0,246.1L493.3,247.2L493.6,248.5L494.4,251.2L495.4,253.5L492.9,253.9L492.2,254.9L492.5,256.5L492.2,258.4L494.1,258.8L494.1,260.4L492.2,259.2L490.6,258.0L489.0,258.4L487.0,257.7L486.2,257.1L483.9,257.5L483.4,255.2L483.5,253.2L481.6,251.9L480.3,253.1L477.8,253.3L476.4,250.4L471.6,250.4Z"/>
<path fill="#f3f9f3" d="M469.1,247.7L470.0,248.6L470.3,249.2L470.9,249.2L471.6,248.6L473.5,248.9L475.5,247.8L475.9,245.2L478.0,243.2L478.2,241.2L479.1,237.8L476.3,237.8L475.9,239.6L473.6,239.6L472.0,239.6L471.9,240.9L473.3,240.8L473.6,243.2L472.8,245.7L470.9,245.4L469.7,246.2Z"/>
<path fill="#c9e7ce" d="M467.3,241.2L469.3,241.2L469.3,239.6L472.0,239.6L471.9,240.9L473.3,240.8L473.6,243.2L472.8,245.7L470.9,245.4L469.7,246.2L469.1,247.7L467.1,245.7L466.0,243.6L466.9,242.2Z"/>
<path fill="#e1f1e3" d="M467.3,241.2L469.3,241.2L469.3,239.6L467.3,239.4ZM465.6,238.1L466.1,237.6L465.8,238.2Z"/>
<path fill="#ffffff" d="M462.9,242.4L463.3,242.1L463.0,242.0Z"/>
<path fill="#c9e7ce" d="M467.3,239.4L469.3,239.6L472.0,239.6L473.6,239.6L475.9,239.6L474.3,237.4L473.6,235.8L475.0,232.5L472.7,229.5L475.0,229.1L473.2,225.4L473.1,225.1L472.7,227.8L470.7,231.1L469.6,233.7L467.9,233.3L466.0,234.8L465.6,236.2L466.9,237.2L467.3,238.1Z"/>
<path fill="#f3f9f3" d="M475.9,239.6L476.3,237.8L479.1,237.8L479.1,235.8L480.3,235.7L484.2,237.0L488.1,235.4L491.0,235.8L489.5,234.5L488.1,232.7L487.0,231.8L485.8,230.7L485.7,229.1L484.9,227.8L482.3,229.4L479.6,230.5L477.0,232.2L475.0,232.5L473.6,235.8L474.3,237.4Z"/>
<path fill="#f3f9f3" d="M473.1,225.1L473.2,225.4L475.0,229.1L472.7,229.5L475.0,232.5L477.0,232.2L479.6,230.5L482.3,229.4L484.9,227.8L484.3,225.4L483.8,224.1L484.3,223.5L486.3,221.5L486.3,216.4L475.6,211.1L474.3,211.8L475.1,215.8L475.0,220.1L472.4,223.1L472.3,224.3Z"/>
<path fill="#f3f9f3" d="M454.5,222.5L455.5,224.6L457.1,226.5L457.9,226.1L459.0,226.9L459.6,224.5L463.3,224.9L465.6,225.1L468.3,224.7L470.9,225.0L472.3,224.3L472.4,223.1L475.0,220.1L475.1,215.8L474.3,211.8L473.2,212.3L470.1,211.1L464.2,214.6L462.2,216.4L459.8,216.8L459.8,220.5L458.9,221.8L456.2,222.1Z"/>
<path fill="#97cf9a" d="M457.8,233.9L457.9,230.5L459.0,229.1L459.0,226.9L459.6,224.5L463.3,224.9L465.6,225.1L468.3,224.7L470.9,225.0L472.3,224.3L473.1,225.1L472.7,227.8L470.7,231.1L469.6,233.7L467.9,233.3L466.0,234.8L465.6,236.2L463.6,236.6L462.2,236.8L460.9,235.0L460.1,234.1Z"/>
<path fill="#c9e7ce" d="M456.3,234.2L457.8,233.9L457.9,230.5L459.0,229.1L459.0,226.9L457.9,226.1L457.1,226.5L455.5,227.8L455.3,228.7L456.3,230.5Z"/>
<path fill="#f3f9f3" d="M455.8,234.4L456.3,234.2L456.3,230.5L455.3,228.7L454.2,227.8L454.9,229.8L454.9,232.5Z"/>
<path fill="#c9e7ce" d="M450.0,235.7L451.5,236.2L455.8,234.4L454.9,232.5L454.9,229.8L454.2,227.8L450.5,227.8L450.6,229.8L450.9,231.5L449.9,233.4Z"/>
<path fill="#f3f9f3" d="M446.8,228.6L448.2,229.5L450.6,229.8L450.5,227.8L454.2,227.8L455.3,228.7L455.5,227.8L457.1,226.5L455.5,224.6L454.5,222.5L451.5,223.5L449.5,224.9L448.3,224.9L447.1,226.7Z"/>
<path fill="#c9e7ce" d="M444.2,236.6L450.0,235.7L449.9,233.4L450.9,231.5L450.6,229.8L448.2,229.5L446.8,228.6L445.9,228.2L443.5,228.9L443.1,231.1L443.1,232.3L444.0,233.1L442.8,233.8L444.2,235.8Z"/>
<path fill="#f3f9f3" d="M438.8,233.3L442.1,235.8L444.2,236.6L444.2,235.8L442.8,233.8L444.0,233.1L443.1,232.3L441.6,231.3L440.4,231.3Z"/>
<path fill="#f3f9f3" d="M436.4,230.5L437.5,232.6L438.8,233.3L440.4,231.3L440.0,230.1L439.2,229.1L437.5,229.3Z"/>
<path fill="#f3f9f3" d="M434.1,227.8L436.4,230.5L437.5,229.3L439.2,229.1L440.0,230.1L440.4,231.3L441.6,231.3L443.1,232.3L443.1,231.1L443.5,228.9L443.1,227.8L442.1,225.9L438.9,225.9L435.9,225.7L435.9,226.9Z"/>
<path fill="#e1f1e3" d="M431.8,226.1L434.1,227.8L435.9,226.9L435.9,225.7L433.4,225.7Z"/>
<path fill="#c9e7ce" d="M431.8,226.1L433.4,225.7L435.9,225.7L438.9,225.9L437.9,222.9L434.8,220.3L432.1,221.0L430.8,222.9L431.7,224.3L434.1,224.1L434.1,224.7L431.7,225.0Z"/>
<path fill="#f3f9f3" d="M431.4,214.0L436.8,214.0L436.8,211.8L438.1,211.2L438.1,207.8L442.6,207.8L442.6,206.0L447.8,209.1L446.3,214.4L446.8,220.5L447.1,221.8L441.7,221.8L438.8,221.7L437.9,222.9L434.8,220.3L432.1,221.0L432.8,218.5L432.1,216.6L432.5,215.4Z"/>
<path fill="#c9e7ce" d="M437.9,222.9L438.8,221.7L441.7,221.8L447.1,221.8L446.8,220.5L446.3,214.4L447.8,209.1L456.6,215.1L458.2,215.9L458.6,217.1L459.8,216.8L459.8,220.5L458.9,221.8L456.2,222.1L454.5,222.5L451.5,223.5L449.5,224.9L448.3,224.9L447.1,226.7L446.8,228.6L445.9,228.2L443.5,228.9L443.1,227.8L442.1,225.9L438.9,225.9Z"/>
<path fill="#ffffff" d="M421.7,220.3L422.2,220.1L422.1,220.5ZM422.5,222.5L422.9,222.2L422.7,222.6ZM420.5,219.8L420.9,219.7L420.7,219.9Z"/>
<path fill="#f3f9f3" d="M470.5,250.2L471.6,250.4L476.4,250.4L477.8,253.3L480.3,253.1L481.6,251.9L483.5,253.2L483.4,255.2L483.9,257.5L486.2,257.1L486.3,259.9L483.7,259.9L483.7,264.1L485.5,266.0L482.9,266.5L479.0,265.7L472.9,265.7L470.0,265.6L470.3,262.5L472.3,259.2L472.7,256.8L471.6,254.5L470.7,250.6ZM470.3,249.2L470.9,249.2L471.6,248.6L470.5,250.2Z"/>
<path fill="#c9e7ce" d="M483.7,259.9L486.3,259.9L486.2,257.1L487.0,257.7L489.0,258.4L490.6,258.0L492.2,259.2L494.1,260.4L494.1,258.8L492.2,258.4L492.5,256.5L492.2,254.9L492.9,253.9L495.4,253.5L495.7,254.0L498.3,255.1L498.8,256.9L498.4,259.2L498.0,260.7L498.4,261.2L494.6,262.3L494.9,263.3L492.9,263.9L490.4,266.4L488.1,266.3L485.5,266.0L483.7,264.1Z"/>
<path fill="#c9e7ce" d="M498.3,255.1L499.7,255.2L500.4,257.2L500.3,258.8L500.5,260.5L502.3,262.4L501.5,265.1L501.1,265.2L500.1,263.9L500.4,261.9L498.4,261.2L498.0,260.7L498.4,259.2L498.8,256.9Z"/>
<path fill="#c9e7ce" d="M508.3,256.4L508.6,259.2L508.6,262.5L506.4,264.9L503.7,266.3L501.1,269.0L501.7,271.9L501.6,274.6L498.4,276.3L498.3,278.3L497.0,278.3L496.9,277.1L497.0,275.2L496.1,272.4L497.6,271.0L498.4,269.0L498.1,267.2L498.4,265.2L497.0,264.5L494.9,263.3L494.6,262.3L498.4,261.2L500.4,261.9L500.1,263.9L501.1,265.2L501.5,265.1L502.3,262.4L500.5,260.5L500.3,258.8L500.4,257.2L501.1,258.0L505.1,257.6Z"/>
<path fill="#c9e7ce" d="M488.1,266.3L490.4,266.4L492.9,263.9L494.9,263.3L497.0,264.5L498.4,265.2L498.1,267.2L498.4,269.0L497.6,271.0L496.1,272.4L493.6,272.2L491.7,271.4L491.3,269.9L489.3,268.6Z"/>
<path fill="#c9e7ce" d="M481.0,275.6L481.0,271.9L482.3,271.9L482.3,266.9L485.4,266.5L488.1,266.3L489.3,268.6L491.3,269.9L491.7,271.4L493.6,272.2L490.4,274.0L489.0,275.5L488.3,276.8L485.0,276.3L483.7,277.6L482.1,278.4Z"/>
<path fill="#c9e7ce" d="M470.0,265.6L472.9,265.7L479.0,265.7L482.9,266.5L485.5,266.0L488.1,266.3L485.4,266.5L482.3,266.9L482.3,271.9L481.0,271.9L481.0,275.6L481.0,280.4L479.6,281.1L477.5,280.8L476.3,280.7L474.6,278.4L473.6,273.0L472.1,270.4L470.3,266.8Z"/>
<path fill="#5bab5b" d="M476.3,280.7L477.5,280.8L479.6,281.1L481.0,280.4L481.0,275.6L482.1,278.4L483.7,277.6L485.0,276.3L488.3,276.8L489.0,275.5L490.4,274.0L493.6,272.2L496.1,272.4L497.0,275.2L496.9,277.1L497.0,278.3L498.3,278.3L497.7,280.6L495.7,282.4L494.4,284.3L492.4,286.2L490.4,287.5L488.6,287.9L485.0,288.1L481.0,289.0L479.0,288.3L478.7,286.2L478.7,284.6L477.4,282.6Z"/>
<path fill="#e1f1e3" d="M490.4,282.0L492.4,280.8L493.6,282.0L492.1,283.4L490.9,283.0Z"/>
<path fill="#e1f1e3" d="M495.4,278.0L496.9,277.1L497.2,278.3L496.0,279.0Z"/>
<path fill="#c9e7ce" d="M520.2,258.5L521.8,263.2L520.7,263.9L520.5,265.9L518.2,273.2L517.1,275.9L514.7,276.7L512.7,274.6L512.2,271.9L513.5,269.2L513.1,265.9L513.8,264.1L516.2,263.5L518.2,262.0L519.4,259.9Z"/>
<path fill="#ffffff" d="M512.0,257.9L512.4,258.3L512.2,258.5ZM513.5,258.8L513.9,258.9L513.7,259.1ZM514.6,259.5L514.9,259.7L514.6,259.9Z"/>
<path fill="#ffffff" d="M531.1,269.2L531.6,269.5L531.2,269.9ZM528.2,270.4L528.9,270.7L528.5,271.1Z"/>
<path fill="#ffffff" d="M528.4,248.6L528.6,248.8L528.5,248.9Z"/>
<path fill="#5bab5b" d="M495.4,149.2L498.4,149.6L502.4,150.0L509.1,152.1L509.6,153.3L507.8,154.2L501.1,153.9L498.4,153.4L497.7,152.9L500.4,155.7L500.8,156.5L504.4,157.3L505.1,156.3L508.4,156.2L507.8,155.0L510.4,153.8L513.4,154.3L513.1,153.0L512.2,150.9L515.8,151.4L516.5,153.1L518.5,152.2L525.2,151.0L527.2,151.3L530.5,150.9L534.5,150.7L535.9,149.2L540.6,149.9L543.9,150.6L545.9,151.3L544.6,149.6L543.9,147.6L545.9,145.6L547.9,144.7L551.7,145.2L551.3,147.6L551.9,150.3L550.6,152.3L550.6,153.9L553.3,152.3L554.0,150.3L553.3,147.6L554.6,145.6L558.6,145.9L558.6,147.6L562.0,146.3L565.3,147.0L564.0,149.0L566.7,146.6L570.7,144.3L574.7,142.0L581.4,141.2L588.1,141.0L593.5,140.2L598.8,140.6L604.2,141.5L606.2,143.6L601.5,143.9L596.1,144.3L605.5,144.0L612.2,144.7L618.9,145.0L624.3,144.3L627.6,146.3L626.9,147.6L632.3,147.0L636.3,146.8L641.7,145.6L643.0,145.2L649.7,145.9L655.0,147.0L658.4,147.8L664.4,147.6L668.4,149.0L669.8,149.6L676.5,149.6L681.8,150.3L682.5,148.8L689.9,149.4L695.2,150.3L695.2,155.7L692.5,156.2L691.9,159.0L694.6,159.3L688.5,160.1L684.5,161.3L682.2,162.5L676.5,162.5L672.9,163.7L673.5,165.0L671.9,165.3L673.1,167.4L671.8,169.3L669.1,171.4L666.8,172.2L664.0,174.6L662.5,172.4L661.7,169.0L662.5,166.3L665.8,163.9L670.4,161.5L673.1,161.0L673.8,159.0L668.4,159.9L664.4,160.3L661.7,163.0L659.1,163.4L656.4,163.0L653.0,163.3L649.0,163.3L645.7,163.3L642.3,165.0L639.0,167.0L636.3,169.0L638.3,170.4L643.4,171.4L642.3,173.0L643.7,173.7L642.3,175.7L642.1,177.7L639.7,179.7L637.0,182.4L633.6,185.1L630.9,184.8L629.2,186.0L629.9,184.4L629.9,182.5L632.4,182.2L635.0,177.8L629.6,178.8L629.2,177.2L624.9,176.0L622.9,172.4L619.6,171.0L616.1,171.3L614.9,173.0L613.5,175.7L611.9,176.4L610.5,176.0L606.8,175.4L602.8,176.5L598.8,176.4L596.1,175.2L590.8,175.0L591.2,174.0L586.6,172.9L585.2,175.7L580.7,175.7L577.4,174.6L573.4,176.2L571.8,176.8L571.1,176.9L568.7,176.2L565.3,174.4L561.3,174.6L558.5,171.3L556.6,170.4L552.6,170.4L549.3,170.1L549.1,168.6L546.6,168.5L541.2,169.8L535.9,170.5L536.5,174.4L534.5,174.8L532.7,174.4L527.2,174.4L522.2,173.4L519.4,174.9L516.9,176.6L517.1,178.4L519.8,180.6L517.8,181.7L517.8,185.1L519.1,186.6L516.5,186.7L514.5,185.5L512.4,185.3L507.8,184.5L506.4,183.7L504.1,182.4L503.5,181.8L505.1,180.4L506.8,179.4L505.3,179.6L507.5,178.5L507.9,176.2L505.1,175.8L501.7,175.2L499.5,172.5L496.8,172.9L496.4,171.6L497.7,171.0L495.4,169.3L495.6,168.2L492.0,167.4L491.0,165.7L490.9,163.9L491.7,163.0L494.6,162.5L492.4,161.7L491.4,161.7L493.4,160.6L496.4,158.5L494.4,157.3L494.4,155.9L494.0,154.3L494.4,152.1L492.4,151.4L492.4,150.4L493.0,150.3L494.4,149.4ZM213.2,150.3L215.9,151.0L219.9,152.3L225.2,153.3L227.0,154.2L223.2,156.3L219.9,155.9L215.9,155.0L213.2,155.7ZM480.7,169.8L480.6,169.8L482.6,168.6L484.6,169.2L484.7,169.8ZM523.2,147.0L525.8,148.0L531.2,148.0L529.2,145.6L532.5,143.6L535.9,142.3L541.2,141.0L546.6,140.0L545.3,139.6L537.2,140.6L530.5,141.9L527.8,143.6L525.2,145.0L523.2,146.3ZM644.3,170.0L645.7,171.7L646.1,174.4L647.7,177.0L645.7,179.7L646.3,180.4L644.3,181.0L644.3,178.4L644.3,175.7L644.1,173.0ZM578.7,136.6L584.1,138.3L593.5,138.6L598.8,137.6L596.1,136.6L588.1,135.9L581.4,135.4ZM637.6,141.9L640.3,142.7L645.7,142.3L649.7,141.9L655.0,142.0L652.4,141.0L644.3,141.0L639.0,141.0ZM641.7,144.3L645.7,144.6L644.3,143.8ZM693.2,147.6L695.2,147.8L695.2,147.0L693.9,147.0ZM213.2,147.8L216.5,147.5L215.9,147.0L213.2,147.0ZM533.2,149.4L535.2,149.2L533.9,148.7ZM518.5,150.3L521.1,150.4L520.5,149.6L518.9,149.8ZM649.7,183.0L653.0,181.7L655.0,180.8L652.4,182.4ZM657.7,179.7L659.1,178.4L661.1,176.4L662.8,175.0L660.4,177.0ZM676.5,168.6L677.1,169.3L676.2,169.0ZM638.0,169.3L639.2,169.0L638.7,169.7Z"/>
<path fill="#97cf9a" d="M507.8,184.5L512.4,185.3L514.5,185.5L516.5,186.7L516.3,187.6L514.5,187.3L512.4,187.6L511.1,187.1L509.8,187.1L509.9,186.0Z"/>
<path fill="#97cf9a" d="M512.4,187.6L514.5,187.3L515.1,188.1L516.5,189.7L516.1,190.5L515.1,189.7L514.2,189.5L512.7,188.9Z"/>
<path fill="#c9e7ce" d="M514.5,187.3L516.3,187.6L516.5,186.7L519.1,186.6L520.5,188.3L521.6,188.7L520.3,189.9L519.7,191.2L518.5,190.7L518.5,189.6L516.5,190.5L516.1,190.5L516.5,189.7L515.1,188.1ZM514.2,189.5L515.1,189.7L516.1,190.5L514.5,190.0Z"/>
<path fill="#c9e7ce" d="M502.4,194.5L503.3,194.0L503.7,193.5L506.4,193.5L509.1,192.9L510.8,192.8L509.5,193.9L509.1,196.5L506.2,197.9L503.5,199.3L502.1,198.7L502.3,197.7L503.2,196.8L502.4,196.3Z"/>
<path fill="#97cf9a" d="M501.2,198.3L502.1,198.7L502.3,197.7L503.2,196.8L502.4,196.3Z"/>
<path fill="#5bab5b" d="M500.1,200.7L500.9,203.1L501.6,201.1L501.9,198.8L502.1,198.7L501.2,198.3L500.9,199.5Z"/>
<path fill="#97cf9a" d="M500.9,203.1L502.4,203.5L504.4,202.4L503.7,200.4L506.7,199.5L506.2,197.9L503.5,199.3L501.9,198.8L501.6,201.1Z"/>
<path fill="#97cf9a" d="M510.8,192.8L514.2,192.8L515.0,194.4L516.1,195.6L515.1,197.1L515.9,198.4L518.2,200.0L518.1,201.1L519.3,202.6L518.3,202.4L517.5,202.3L516.5,203.6L514.1,203.5L510.4,201.0L508.3,199.9L506.7,199.5L506.2,197.9L509.1,196.5L509.5,193.9Z"/>
<path fill="#97cf9a" d="M516.5,203.6L517.5,202.3L518.3,202.4L519.0,204.4L517.8,204.4Z"/>
<path fill="#5bab5b" d="M500.9,203.1L500.5,205.1L503.1,207.8L504.0,209.4L505.8,211.1L506.6,213.8L508.4,216.0L509.8,218.5L511.4,220.6L512.0,219.4L513.8,219.3L516.5,219.5L518.5,218.2L523.8,217.1L527.8,215.8L528.8,213.1L528.1,212.2L524.6,211.9L523.3,210.2L522.9,209.8L522.2,209.4L521.4,208.2L521.3,207.1L519.8,205.8L519.0,204.4L517.8,204.4L516.5,203.6L514.1,203.5L510.4,201.0L508.3,199.9L506.7,199.5L503.7,200.4L504.4,202.4L502.4,203.5Z"/>
<path fill="#c9e7ce" d="M511.4,220.6L512.0,219.4L513.8,219.3L516.5,219.5L518.5,218.2L523.8,217.1L525.3,220.2L524.1,221.7L519.8,223.8L517.1,224.6L514.5,225.4L512.4,225.7L512.0,224.5L511.5,222.5ZM525.7,225.7L527.0,225.7L526.5,226.1Z"/>
<path fill="#c9e7ce" d="M523.8,217.1L527.8,215.8L528.8,213.1L528.1,212.2L528.9,210.4L529.7,209.2L530.0,209.8L532.7,211.0L534.3,212.4L532.7,215.2L531.6,217.1L529.9,218.5L528.2,219.3L525.3,220.2Z"/>
<path fill="#97cf9a" d="M523.3,210.2L524.6,211.9L528.1,212.2L528.9,210.4L529.7,209.2L529.3,207.8L527.2,209.8L525.2,210.2Z"/>
<path fill="#97cf9a" d="M522.2,209.4L522.9,209.8L523.3,209.1L523.2,207.8L522.5,207.8Z"/>
<path fill="#5bab5b" d="M514.2,192.8L513.1,189.9L514.2,189.5L514.5,190.0L516.1,190.5L516.5,190.5L518.5,189.6L518.5,190.7L519.7,191.2L520.1,192.4L521.8,193.1L523.8,193.6L526.4,193.1L527.6,192.5L529.2,191.6L530.9,191.5L533.6,192.4L536.1,193.6L536.1,194.9L535.3,196.7L535.7,200.4L537.0,201.1L535.7,202.7L538.3,204.7L539.0,206.3L537.2,207.2L536.7,208.8L533.2,208.6L530.9,208.0L530.3,206.3L527.6,207.1L525.2,206.4L523.2,205.2L522.2,203.8L521.1,202.2L519.8,201.8L519.3,202.6L518.1,201.1L518.2,200.0L515.9,198.4L515.1,197.1L516.1,195.6L515.0,194.4Z"/>
<path fill="#f3f9f3" d="M526.4,193.1L525.2,189.7L525.2,188.1L524.9,186.8L526.5,186.0L528.5,187.3L530.5,187.3L532.5,185.5L534.5,186.1L534.7,187.2L537.1,187.6L537.9,189.1L540.6,190.5L543.2,191.7L543.2,192.5L542.2,192.4L540.6,194.0L538.6,195.1L537.6,195.3L536.1,194.9L536.1,193.6L533.6,192.4L530.9,191.5L529.2,191.6L527.6,192.5Z"/>
<path fill="#c9e7ce" d="M529.2,187.3L529.2,182.4L532.5,181.7L535.9,183.3L537.2,184.4L541.1,184.1L542.7,185.1L542.6,186.4L545.3,187.7L547.9,186.4L549.7,186.4L552.1,188.0L550.2,188.8L548.6,188.5L547.0,188.1L546.1,188.8L545.0,189.6L545.8,191.5L545.0,192.8L543.2,192.5L543.2,191.7L540.6,190.5L537.9,189.1L537.1,187.6L534.7,187.2L534.5,186.1L532.5,185.5L530.5,187.3Z"/>
<path fill="#c9e7ce" d="M519.8,180.6L517.1,178.4L516.9,176.6L519.4,174.9L522.2,173.4L527.2,174.4L532.7,174.4L534.5,174.8L536.5,174.4L535.9,170.5L541.2,169.8L546.6,168.5L549.1,168.6L549.3,170.1L552.6,170.4L556.6,170.4L558.5,171.3L561.3,174.6L565.3,174.4L568.7,176.2L571.1,176.9L569.1,177.8L569.0,179.4L565.3,179.4L564.4,181.7L561.3,182.4L562.3,184.8L561.6,186.1L560.0,185.3L556.0,185.1L553.3,184.8L552.6,185.7L549.3,185.6L547.9,186.4L545.3,187.7L542.6,186.4L542.7,185.1L541.1,184.1L537.2,184.4L535.9,183.3L532.5,181.7L529.2,182.4L529.2,187.3L528.5,187.3L526.5,186.0L524.9,186.8L524.5,185.3L522.5,183.0L521.6,183.3L522.9,182.0L525.2,182.0L525.2,180.0L522.5,179.7Z"/>
<path fill="#c9e7ce" d="M561.6,186.1L560.0,185.3L556.0,185.1L553.3,184.8L552.6,185.7L549.3,185.6L547.9,186.4L549.7,186.4L552.1,188.0L550.2,188.8L548.6,188.5L547.0,189.2L548.6,189.6L550.6,189.9L552.9,189.7L553.3,188.9L556.0,188.5L558.6,187.6Z"/>
<path fill="#c9e7ce" d="M545.0,189.6L546.1,188.8L547.0,188.1L548.6,188.5L547.0,189.2L548.6,189.6L550.6,189.9L552.9,189.7L554.6,191.1L554.5,192.8L552.6,192.5L550.1,193.5L549.9,191.7L548.2,191.7L547.0,192.9L545.3,193.1L545.0,192.8L545.8,191.5Z"/>
<path fill="#f3f9f3" d="M536.1,193.6L536.1,194.9L537.6,195.3L538.6,195.1L540.6,194.0L542.2,192.4L543.2,192.5L545.0,192.8L545.3,193.1L547.0,192.9L548.2,191.7L549.9,191.7L550.1,193.5L552.6,192.5L554.5,192.8L554.0,193.2L550.6,193.7L549.5,194.4L549.3,196.4L547.9,197.3L547.3,198.4L547.0,199.9L545.0,200.5L543.1,201.2L543.0,202.7L539.9,203.2L537.9,203.2L535.7,202.7L537.0,201.1L535.7,200.4L535.3,196.7Z"/>
<path fill="#5bab5b" d="M535.7,202.7L537.9,203.2L539.9,203.2L543.0,202.7L543.1,201.2L545.0,200.5L547.0,199.9L547.3,198.4L547.9,197.3L549.3,196.4L549.5,194.4L550.6,193.7L554.0,193.2L554.5,192.8L556.0,193.7L558.4,195.1L557.0,196.1L553.3,196.1L553.3,198.4L555.2,199.3L554.0,201.1L551.9,203.1L550.5,205.2L548.6,205.1L547.3,206.4L548.2,208.2L549.3,209.9L546.3,210.0L545.5,210.8L544.4,210.4L543.5,209.1L540.6,208.8L536.7,208.8L537.2,207.2L539.0,206.3L538.3,204.7Z"/>
<path fill="#5bab5b" d="M545.5,210.8L546.3,210.0L549.3,209.9L548.2,208.2L547.3,206.4L548.6,205.1L550.5,205.2L551.9,203.1L554.0,201.1L555.2,199.3L553.3,198.4L553.3,196.1L557.0,196.1L558.4,195.1L559.8,196.7L559.6,198.9L559.7,200.8L562.7,202.2L561.5,204.0L565.7,205.9L568.0,206.8L572.2,207.2L572.3,205.2L573.1,205.1L573.2,206.0L574.4,206.8L577.4,206.6L577.0,205.4L580.1,203.8L582.7,203.2L584.5,204.7L584.1,206.2L581.7,207.8L580.9,209.5L580.1,210.6L579.1,210.4L579.1,212.8L578.2,213.2L577.8,210.8L576.5,211.5L576.3,210.4L577.7,209.0L574.4,208.7L574.4,207.8L572.6,207.1L572.2,208.0L573.2,208.8L572.2,209.8L573.1,211.5L573.4,213.5L572.0,213.6L570.7,214.4L570.6,215.4L568.0,216.4L566.7,218.1L564.4,220.3L561.7,221.8L561.6,224.5L561.2,226.5L561.1,228.7L560.0,230.1L558.9,230.6L558.0,231.7L556.6,230.5L555.7,227.1L554.4,225.1L553.8,222.7L552.6,221.1L551.7,217.1L551.5,214.4L551.3,213.4L550.9,214.4L549.1,214.8L546.6,212.7L547.9,212.3L547.5,211.9Z"/>
<path fill="#97cf9a" d="M561.5,204.0L562.7,202.2L564.0,202.0L566.7,203.9L569.4,205.1L572.3,205.2L572.2,207.2L568.0,206.8L565.7,205.9Z"/>
<path fill="#e1f1e3" d="M573.2,206.0L573.1,205.1L574.3,204.8L577.0,205.4L577.4,206.6L574.4,206.8Z"/>
<path fill="#5bab5b" d="M572.2,209.8L573.2,208.8L572.2,208.0L572.6,207.1L574.4,207.8L574.4,208.7L577.7,209.0L576.3,210.4L576.5,211.5L577.8,210.8L578.2,213.2L577.8,214.8L577.1,212.7L575.4,213.0L573.4,213.5L573.1,211.5Z"/>
<path fill="#97cf9a" d="M561.1,229.5L561.7,229.4L562.9,231.1L563.9,232.7L563.5,233.9L562.1,234.6L561.3,234.1L561.1,232.1Z"/>
<path fill="#f3f9f3" d="M577.8,214.8L578.2,213.2L579.1,212.8L579.1,210.4L580.1,210.6L580.9,209.5L581.7,207.8L584.1,206.2L584.5,204.7L586.1,205.6L586.4,208.0L585.0,209.4L585.0,210.6L586.6,211.5L587.0,213.0L588.2,213.8L589.6,213.6L588.5,215.4L586.8,216.0L585.2,217.8L586.6,220.6L585.7,222.2L586.8,224.5L587.6,226.7L586.2,229.1L586.1,226.5L585.0,222.7L584.8,220.5L582.7,220.9L581.8,221.4L580.5,221.1L580.7,219.1L580.1,217.1L578.7,215.8Z"/>
<path fill="#97cf9a" d="M586.2,229.1L585.8,231.8L587.7,233.8L588.2,233.9L589.4,234.8L590.9,234.2L589.4,233.3L588.6,232.7L588.1,230.5L587.0,230.1L587.2,228.1L588.0,225.8L588.1,224.6L589.4,224.7L589.3,225.7L591.0,226.5L592.0,226.9L591.3,224.5L592.1,223.4L595.1,223.4L595.6,221.7L594.5,220.5L594.4,219.1L592.8,217.9L590.9,218.5L589.4,219.0L589.7,216.4L588.8,216.4L588.9,215.4L588.5,215.4L586.8,216.0L585.2,217.8L586.6,220.6L585.7,222.2L586.8,224.5L587.6,226.7Z"/>
<path fill="#c9e7ce" d="M588.5,215.4L588.9,215.4L589.6,213.6L590.5,214.2L591.0,212.6L591.6,213.5L592.1,214.7L594.1,215.2L593.5,216.6L595.1,217.7L596.9,219.9L598.1,221.1L598.3,222.9L596.1,223.3L595.1,223.4L595.6,221.7L594.5,220.5L594.4,219.1L592.8,217.9L590.9,218.5L589.4,219.0L589.7,216.4L588.8,216.4Z"/>
<path fill="#c9e7ce" d="M592.0,226.9L591.3,224.5L592.1,223.4L595.1,223.4L596.1,223.3L598.3,222.9L598.1,225.9L596.1,227.8L594.1,228.6L592.8,228.3Z"/>
<path fill="#97cf9a" d="M591.0,212.6L593.3,212.2L595.2,211.4L597.1,212.0L598.8,213.8L597.1,215.0L595.9,216.7L596.7,218.5L598.3,220.5L599.2,221.1L600.4,223.1L600.7,225.4L600.4,227.1L598.1,228.6L597.2,228.7L595.3,231.0L594.5,230.9L594.7,229.1L594.1,228.6L596.1,227.8L598.1,225.9L598.3,222.9L598.1,221.1L596.9,219.9L595.1,217.7L593.5,216.6L594.1,215.2L592.1,214.7L591.6,213.5Z"/>
<path fill="#5bab5b" d="M588.2,233.9L588.6,235.8L588.9,237.2L590.0,238.9L591.4,239.8L592.8,240.6L593.7,240.6L592.8,238.8L592.7,237.2L591.4,235.2L590.9,234.2L589.4,234.8ZM601.0,239.8L602.8,240.5L603.4,239.2L605.5,238.2L606.8,236.4L607.6,237.2L608.6,236.0L609.5,234.5L610.6,233.1L611.8,234.1L613.8,235.4L612.2,236.8L611.5,236.9L609.3,236.8L608.9,238.5L608.2,239.2L607.5,240.5L604.8,240.5L602.8,241.2L601.5,240.8Z"/>
<path fill="#c9e7ce" d="M606.8,236.4L607.6,237.2L608.6,236.0Z"/>
<path fill="#97cf9a" d="M581.8,235.0L584.8,235.6L586.4,237.4L588.5,239.4L590.1,240.1L592.1,241.4L593.2,243.2L594.1,244.9L596.1,246.5L595.9,250.2L594.1,250.2L591.2,247.8L588.8,245.2L587.0,242.1L584.4,238.5L582.1,236.1ZM595.1,251.6L596.1,250.4L599.5,251.2L602.6,251.1L605.2,251.7L607.5,252.9L607.4,254.1L603.5,253.6L599.5,252.9L596.8,252.4ZM601.0,239.8L601.5,240.8L602.8,241.2L604.8,240.5L607.5,240.5L608.2,239.2L608.9,238.5L609.3,236.8L611.5,236.9L612.2,239.6L611.9,241.2L613.4,241.2L611.5,243.6L610.2,244.5L609.8,247.2L607.6,248.0L605.5,246.8L603.8,246.9L601.8,246.4L601.5,244.2L600.3,242.9L600.2,240.8ZM614.9,240.9L616.2,240.9L618.9,241.3L621.6,240.4L620.8,242.0L616.9,241.8L615.3,243.7L616.9,243.7L619.3,243.7L617.6,244.9L618.8,247.8L618.0,248.9L616.9,247.8L616.2,246.1L615.3,246.5L615.4,249.8L614.2,249.8L614.1,247.2L613.3,246.2L614.5,242.6ZM608.2,253.5L609.1,253.7L608.5,254.3ZM609.5,253.7L610.5,253.9L609.9,254.4ZM610.6,253.9L612.2,253.5L613.5,253.9L612.2,254.4ZM614.7,253.9L616.9,253.9L618.8,253.5L618.6,254.1L614.9,254.4ZM619.6,256.3L620.9,254.8L621.6,254.5L621.4,255.3L620.9,256.1ZM613.5,255.2L616.0,255.9L614.9,256.3ZM624.9,240.1L625.6,239.8L626.3,241.2L625.5,243.2L624.9,241.8ZM625.6,246.5L629.3,246.9L627.6,247.2L625.6,247.0ZM622.9,246.8L624.5,247.0L623.6,247.6ZM629.6,243.6L631.6,243.0L633.6,243.6L633.9,245.8L635.6,246.9L637.6,244.9L639.0,244.6L643.0,246.0L643.0,254.7L641.5,253.3L640.1,253.7L638.4,253.7L639.1,251.9L639.9,250.5L636.3,248.6L633.6,247.7L632.0,248.0L630.9,246.4L633.0,245.8L631.3,245.6L629.6,244.5ZM596.1,245.2L597.1,246.2L595.9,245.4ZM598.4,246.1L599.1,246.5L598.5,246.8ZM633.9,250.5L634.7,250.8L634.2,251.6ZM629.5,252.7L630.5,252.3L629.9,253.2ZM584.4,240.8L585.3,241.4L584.8,240.6ZM586.4,243.8L587.0,244.8L586.5,244.6Z"/>
<path fill="#ffffff" d="M621.6,254.5L624.3,253.7L623.6,254.5L621.4,255.3Z"/>
<path fill="#e1f1e3" d="M643.0,246.0L645.7,247.0L647.7,247.6L649.4,249.2L651.0,250.5L652.1,251.2L651.3,251.9L652.6,253.3L654.4,255.2L655.7,256.3L653.7,256.3L651.7,255.9L650.4,254.4L647.7,252.8L646.3,253.6L645.0,254.8L643.0,254.7ZM653.0,250.0L655.7,249.8L658.0,248.2L657.1,249.8L655.0,250.9L653.0,250.5ZM656.1,246.0L658.4,247.6L659.1,248.8L657.7,247.2ZM661.3,249.8L662.8,251.5L662.1,251.5Z"/>
<path fill="#97cf9a" d="M615.5,217.8L617.6,217.9L618.0,219.8L616.9,221.4L617.2,223.4L620.0,224.1L620.4,225.7L618.9,224.7L617.4,223.9L615.7,224.1L615.7,223.0L614.9,221.8L615.3,220.5ZM617.6,233.1L619.6,231.0L622.0,229.5L623.3,231.4L623.6,233.4L622.1,235.0L620.2,233.8L619.6,232.3ZM620.6,225.8L622.0,226.1L622.4,227.7L621.6,227.5ZM617.6,226.7L618.9,227.1L617.6,228.5ZM618.2,229.1L619.3,228.1L619.2,230.2L618.4,229.8ZM611.1,231.3L614.1,228.1L614.3,227.4L612.6,230.1ZM615.4,224.6L616.8,224.6L616.6,226.1L616.0,225.7ZM620.8,227.3L621.6,227.9L621.6,229.0L621.0,228.5ZM619.4,227.9L620.2,227.5L619.7,229.1Z"/>
<path fill="#5bab5b" d="M615.0,211.8L616.2,209.1L617.4,209.0L616.9,211.1L616.0,213.1Z"/>
<path fill="#5bab5b" d="M628.3,197.6L629.6,197.2L630.9,198.4L630.1,200.5L629.1,201.0L628.5,199.5L627.9,198.4ZM631.5,197.6L634.0,196.7L634.6,197.3L633.6,198.0L632.3,198.7L631.5,198.4ZM629.6,197.1L629.6,196.5L631.3,195.3L633.0,195.1L635.6,194.9L636.3,194.0L637.4,192.8L638.0,193.3L639.7,192.5L641.0,191.1L641.7,189.3L641.7,188.0L643.0,187.1L643.7,188.4L644.3,189.7L643.0,191.3L643.0,193.2L642.6,194.7L641.7,195.7L640.3,195.9L639.2,196.3L637.6,196.3L637.4,196.7L636.3,197.7L635.4,197.6L635.0,196.5L632.3,196.7L630.9,197.2ZM641.7,187.1L642.1,186.1L641.4,185.6L642.3,184.7L643.7,184.7L643.9,181.8L645.7,183.2L648.8,183.3L649.0,184.7L647.0,185.2L646.1,186.4L644.1,185.6L643.0,185.9L643.0,186.8ZM625.2,207.6L626.0,206.7L625.5,207.1ZM627.3,204.7L627.9,204.4L627.5,205.0ZM628.8,202.0L629.2,201.9L628.9,202.2Z"/>
<path fill="#5bab5b" d="M623.4,196.5L624.9,196.1L627.2,195.5L627.6,194.4L627.3,192.8L626.1,190.9L623.9,192.0L623.7,193.1L623.3,194.4L623.6,195.5ZM623.2,198.0L624.1,197.7L623.7,198.1Z"/>
<path fill="#ffffff" d="M620.6,189.1L622.9,187.7L624.1,186.7L625.6,187.1L626.0,186.4L627.9,185.9L629.2,186.0L628.3,187.1L627.9,188.0L625.6,189.2L624.8,190.1L626.1,190.9L623.9,192.0L622.0,192.1L621.6,191.1L622.0,189.7Z"/>
<path fill="#21601f" d="M629.2,186.0L629.9,184.4L629.9,182.5L632.4,182.2L635.0,177.8L629.6,178.8L629.2,177.2L624.9,176.0L622.9,172.4L619.6,171.0L616.1,171.3L614.9,173.0L613.5,175.7L611.9,176.4L610.5,176.0L608.9,178.5L611.5,178.8L614.6,180.1L610.9,180.5L606.8,182.4L604.0,184.1L601.5,185.5L594.8,186.9L589.4,185.6L584.1,185.3L583.1,183.7L581.9,183.3L579.4,182.4L576.0,182.1L575.9,179.8L572.0,177.7L571.8,176.8L571.1,176.9L569.1,177.8L569.0,179.4L565.3,179.4L564.4,181.7L561.3,182.4L562.3,184.8L561.6,186.1L558.6,187.6L556.0,188.5L553.3,188.9L552.9,189.7L554.6,191.1L554.5,192.8L556.0,193.7L558.4,195.1L559.8,196.7L559.6,198.9L559.7,200.8L562.7,202.2L564.0,202.0L566.7,203.9L569.4,205.1L572.3,205.2L573.1,205.1L574.3,204.8L577.0,205.4L580.1,203.8L582.7,203.2L584.5,204.7L586.1,205.6L586.4,208.0L585.0,209.4L585.0,210.6L586.6,211.5L587.0,213.0L588.2,213.8L589.6,213.6L590.5,214.2L591.0,212.6L593.3,212.2L595.2,211.4L597.1,212.0L598.8,213.8L600.8,213.8L601.1,215.4L601.9,215.4L602.2,214.0L603.9,213.6L606.2,212.8L607.2,212.6L610.2,211.8L612.2,209.9L614.2,208.4L614.6,206.7L616.2,204.7L617.4,202.6L616.2,201.8L617.4,201.1L617.3,200.0L615.5,198.4L614.9,196.4L613.8,195.7L615.3,194.4L618.2,193.1L616.2,192.3L613.5,192.7L612.2,191.5L611.8,190.4L613.5,190.0L616.2,188.0L617.3,188.4L616.5,190.7L618.2,189.6L620.6,189.1L622.9,187.7L624.1,186.7L625.6,187.1L626.0,186.4L627.9,185.9ZM599.7,216.8L600.8,215.8L602.3,215.6L602.8,216.3L601.5,217.9L600.2,218.1Z"/>
<path fill="#c9e7ce" d="M571.8,176.8L573.4,176.2L577.4,174.6L580.7,175.7L585.2,175.7L586.6,172.9L591.2,174.0L590.8,175.0L596.1,175.2L598.8,176.4L602.8,176.5L606.8,175.4L610.5,176.0L608.9,178.5L611.5,178.8L614.6,180.1L610.9,180.5L606.8,182.4L604.0,184.1L601.5,185.5L594.8,186.9L589.4,185.6L584.1,185.3L583.1,183.7L581.9,183.3L579.4,182.4L576.0,182.1L575.9,179.8L572.0,177.7Z"/>
<path fill="#2b6f29" d="M607.1,271.6L609.5,270.3L613.5,269.2L616.9,267.9L618.0,265.5L619.6,265.6L620.9,263.9L622.2,261.9L624.3,261.1L626.3,262.3L627.7,262.4L628.3,259.9L629.3,259.1L631.6,257.9L635.0,258.8L637.4,258.8L636.3,260.5L635.6,262.3L638.3,263.9L641.0,265.9L642.7,266.0L643.7,262.5L643.8,259.6L645.0,256.9L646.3,260.5L646.7,261.7L648.8,262.5L649.0,264.5L650.0,267.6L652.1,268.8L653.7,269.9L656.0,272.7L657.1,274.6L659.1,276.6L659.7,279.2L659.7,281.0L659.1,283.9L657.7,286.3L656.7,287.9L655.3,290.6L654.9,292.6L651.7,293.3L650.1,294.7L648.1,293.7L646.3,294.3L643.7,293.7L641.7,292.6L641.0,290.6L639.7,290.1L639.7,289.0L638.7,289.5L638.3,287.9L638.8,286.3L637.6,287.5L636.3,289.0L635.8,289.1L633.9,286.3L630.9,285.3L626.9,284.7L622.9,285.7L620.2,286.6L619.6,287.8L614.9,287.8L612.2,289.3L609.5,289.3L608.2,288.3L609.1,285.3L608.2,283.2L607.1,279.9L606.2,277.2L606.0,274.6L606.4,272.6ZM648.0,296.9L650.4,297.4L652.8,297.1L652.8,298.9L651.7,300.3L649.7,300.7L648.6,299.3ZM637.1,290.2L638.4,290.1L639.1,290.5L637.4,290.6ZM628.7,257.7L630.0,257.6L629.3,258.3ZM637.0,260.9L637.5,261.2L637.1,261.5Z"/>
<path fill="#5bab5b" d="M685.4,288.5L687.6,289.7L689.2,291.3L689.9,292.6L692.3,292.7L693.2,292.9L692.5,294.6L691.2,295.3L689.9,297.7L688.8,298.1L688.1,297.7L688.5,295.9L686.9,295.0L688.0,293.3L688.1,291.9L685.8,289.3ZM685.4,296.6L687.5,297.5L687.2,298.6L685.6,300.6L683.6,301.7L682.9,303.8L681.2,304.8L679.6,304.8L677.1,304.0L679.2,301.7L682.5,299.9L683.8,298.3L684.5,297.1ZM678.6,305.0L679.4,305.2L678.9,305.6Z"/>
<path fill="#ffffff" d="M673.8,269.4L677.1,271.8L677.8,272.4L675.1,271.0Z"/>
<path fill="#ffffff" d="M691.6,266.3L693.2,265.9L693.3,266.7L691.9,266.8ZM693.9,264.5L695.2,264.1L694.6,264.9Z"/>
<path fill="#ffffff" d="M663.8,251.5L665.1,252.3L664.2,252.1ZM666.4,252.7L668.2,253.7L667.1,253.5ZM668.2,254.9L669.5,255.6L668.4,255.6ZM669.4,253.7L670.2,255.1L669.6,254.5ZM670.2,256.3L671.5,256.8L670.6,256.8Z"/>
<path fill="#ffffff" d="M677.4,262.5L678.1,263.3L677.5,263.5ZM679.4,265.9L679.8,266.3L679.4,266.3ZM678.3,264.0L678.9,264.5L678.3,264.5Z"/>
<path fill="#ffffff" d="M223.0,260.5L223.6,260.7L223.2,260.9ZM224.0,261.1L224.6,261.2L224.2,261.3ZM253.9,265.9L254.4,266.1L254.0,266.3ZM219.5,270.7L219.9,270.8L219.6,271.0Z"/>
<path fill="#ffffff" d="M647.8,224.9L648.4,224.3L648.2,224.9ZM638.8,229.9L639.4,229.7L639.1,230.1ZM634.2,232.7L634.6,232.2L634.4,232.7ZM665.9,233.4L666.3,233.1L666.2,233.5ZM672.3,235.6L672.6,235.3L672.5,235.6ZM685.7,240.8L686.1,240.5L686.0,240.8ZM687.7,244.9L688.1,244.6L688.0,245.0ZM657.3,232.7L657.7,232.5L657.6,232.7ZM683.2,233.1L683.7,232.9L683.4,233.1Z"/></g><path fill="none" stroke="#f0a422" stroke-width="1.3" stroke-linejoin="round" d="M431.4,214.0L431.6,213.1L432.8,210.7L434.9,207.4L436.5,205.5L440.8,202.7L441.7,199.1L445.5,196.7L446.3,194.7L447.1,194.5L451.3,195.6L456.2,193.7L458.2,193.2L461.6,193.3L464.2,193.1L465.7,193.2L467.3,192.7L468.9,193.1L468.3,194.4L468.9,195.7L467.7,196.7L469.1,198.0L470.9,198.7L474.6,199.3L475.2,200.5L477.6,201.2L479.6,202.0L481.0,201.1L481.1,199.3L483.0,198.5L485.1,198.9L487.8,200.3L490.4,200.5L493.0,201.2L495.7,200.4L497.4,200.8L500.1,200.7L500.9,199.5L501.2,198.3L502.4,196.3L502.4,194.5L502.1,193.6L497.7,194.3L495.2,193.3L493.7,194.1L490.8,193.1L490.1,191.1L489.6,190.4L489.3,190.5L489.0,190.0L489.4,190.1L489.1,189.7L489.3,189.1L491.0,188.5L493.7,188.1L493.3,187.5L496.1,187.5L498.4,186.4L501.1,186.4L503.7,187.5L507.4,187.7L509.8,187.1L509.9,186.0L503.5,181.8L505.1,180.4L506.8,179.4L505.3,179.6L501.1,180.8L501.3,181.7L503.2,181.8L501.1,182.4L499.1,183.2L497.7,181.8L499.2,180.9L496.8,180.2L495.3,180.4L492.5,184.1L491.7,186.4L493.0,187.5L491.0,187.7L489.3,188.7L489.0,188.0L486.3,188.0L486.7,188.9L484.9,188.5L484.5,189.7L485.3,190.4L486.6,190.9L487.0,191.7L486.3,191.3L486.3,192.1L485.3,191.9L485.3,192.7L484.7,193.7L484.2,193.9L483.3,193.3L482.7,192.0L484.3,191.5L482.5,191.3L481.9,190.5L480.0,188.5L480.2,186.5L474.6,183.4L473.6,182.1L472.8,182.6L472.2,181.7L470.7,182.0L470.8,183.4L472.4,184.4L473.2,185.9L475.6,186.5L479.0,188.9L477.0,188.4L476.4,189.5L477.1,190.4L475.8,191.9L475.1,191.4L474.4,193.5L470.9,192.3L470.8,191.7L472.0,191.5L475.3,191.3L475.9,190.4L475.1,189.1L473.6,188.3L471.6,187.5L470.5,186.7L468.9,185.9L468.3,185.1L467.7,183.7L466.0,183.2L464.9,183.8L464.2,184.0L462.5,184.9L460.6,184.5L458.4,184.9L458.5,186.5L455.4,188.0L453.8,189.9L454.5,190.7L453.3,192.3L451.4,193.3L448.2,193.5L446.7,194.4L445.8,193.3L444.3,192.8L442.3,193.1L442.4,191.1L441.5,190.7L442.3,188.8L442.3,186.5L441.7,185.1L443.5,184.1L451.8,184.5L452.6,182.8L452.7,181.6L451.3,179.6L448.3,178.6L447.8,177.8L450.2,177.3L452.1,177.6L451.8,176.1L454.5,176.4L456.3,174.5L458.8,173.8L459.6,173.0L460.5,171.7L461.6,171.2L463.4,171.2L464.9,170.8L465.7,170.4L465.7,169.2L465.0,168.4L465.2,166.6L465.7,166.2L468.4,165.4L468.0,167.0L468.8,167.4L467.8,168.4L468.7,168.4L468.5,168.9L467.5,168.9L467.5,169.3L467.6,169.8L468.9,169.8L468.9,170.4L470.9,169.8L472.3,169.7L473.2,170.5L476.3,169.7L479.0,169.3L480.6,169.8L482.6,168.6L482.3,167.6L482.3,166.3L483.3,165.5L484.5,165.4L485.3,166.3L486.3,166.2L487.0,164.5L485.7,164.1L485.7,163.4L487.0,163.0L491.7,163.0L494.6,162.5L492.4,161.7L484.9,162.5L482.7,161.5L483.0,161.0L482.7,159.0L484.3,157.8L487.0,156.3L488.1,155.5L486.5,154.6L484.1,154.7L483.0,156.2L481.6,157.3L479.0,158.3L477.4,159.7L477.2,161.4L478.7,161.7L479.4,162.6L478.3,163.7L476.7,164.6L476.3,166.3L475.6,167.4L473.7,167.6L473.3,168.4L471.6,168.5L470.1,165.5L469.2,164.6L469.5,163.7L468.9,163.5L468.4,163.0L465.2,164.9L463.6,165.0L461.6,163.9L460.9,162.3L460.9,160.3L461.2,159.4L463.6,158.3L467.6,157.0L470.9,154.3L471.6,153.0L473.6,151.9L471.6,151.7L479.6,149.0L483.0,148.6L488.7,147.4L491.7,147.5L495.7,148.4L494.4,149.4L495.4,149.2L502.4,150.0L509.1,152.1L509.6,153.3L507.8,154.2L501.1,153.9L498.2,153.3L500.4,155.7L500.8,156.5L504.4,157.3L505.1,156.3L508.4,156.2L507.8,155.0L510.4,153.8L513.4,154.3L513.1,153.0L512.2,150.9L515.8,151.4L516.5,153.1L518.5,152.2L525.2,151.0L527.2,151.3L530.5,150.9L534.5,150.7L535.9,149.2L540.6,149.9L543.9,150.6L545.9,151.3L544.6,149.6L543.9,147.6L545.9,145.6L547.9,144.7L551.7,145.2L551.3,147.6L551.9,150.3L550.6,152.3L550.6,153.9L553.3,152.3L554.0,150.3L553.3,147.6L554.6,145.6L558.6,145.9L558.6,147.6L562.0,146.3L565.3,147.0L564.3,148.6L564.4,148.7L566.7,146.6L574.7,142.0L581.4,141.2L588.1,141.0L593.5,140.2L598.8,140.6L604.2,141.5L606.2,143.6L603.2,143.8L603.2,144.1L605.5,144.0L612.2,144.7L618.9,145.0L624.3,144.3L627.6,146.3L626.9,147.6L632.3,147.0L636.3,146.8L643.0,145.2L649.7,145.9L658.4,147.8L664.4,147.6L668.4,149.0L669.8,149.6L676.5,149.6L681.8,150.3L682.5,148.8L689.9,149.4L695.2,150.3L695.2,155.7L692.5,156.2L691.9,159.0L694.6,159.3L688.5,160.1L684.5,161.3L682.2,162.5L676.5,162.5L672.9,163.7L673.5,165.0L671.9,165.3L673.1,167.4L671.8,169.3L669.1,171.4L666.8,172.2L664.0,174.6L662.5,172.4L661.7,169.0L662.5,166.3L665.8,163.9L670.4,161.5L673.1,161.0L673.8,159.0L668.4,159.9L664.4,160.3L661.7,163.0L659.1,163.4L656.4,163.0L653.0,163.3L645.7,163.3L642.3,165.0L639.0,167.0L636.3,169.0L638.3,170.4L643.4,171.4L642.3,173.0L643.7,173.7L642.3,175.7L642.1,177.7L639.7,179.7L637.0,182.4L633.6,185.1L630.9,184.8L629.2,186.0L628.3,187.1L627.9,188.0L625.6,189.2L624.8,190.1L626.1,190.9L627.3,192.8L627.6,194.4L627.2,195.5L623.4,196.5L623.6,195.5L623.3,194.4L623.9,192.0L622.0,192.1L621.6,191.1L622.0,189.7L620.6,189.1L618.2,189.6L616.5,190.7L617.3,188.4L616.2,188.0L613.5,190.0L611.8,190.4L612.2,191.5L613.5,192.7L616.2,192.3L618.2,193.1L615.3,194.4L613.8,195.7L614.9,196.4L615.5,198.4L617.3,200.0L617.4,201.1L616.2,201.8L617.4,202.6L616.2,204.7L614.6,206.7L614.2,208.4L612.2,209.9L610.2,211.8L602.2,214.0L601.9,215.4L601.1,215.4L600.8,213.8L598.8,213.8L597.1,215.0L595.9,216.7L596.7,218.5L598.3,220.5L599.2,221.1L600.4,223.1L600.7,225.4L600.4,227.1L598.1,228.6L597.2,228.7L595.3,231.0L594.5,230.9L594.7,229.1L594.1,228.6L592.8,228.3L592.0,226.9L589.3,225.7L589.4,224.7L588.1,224.6L588.0,225.8L587.2,228.1L587.0,230.1L588.1,230.5L588.6,232.7L590.9,234.2L592.7,237.2L592.8,238.8L593.7,240.6L592.8,240.6L590.0,238.9L588.9,237.2L588.2,233.9L587.7,233.8L585.8,231.8L586.2,229.1L586.1,226.5L585.0,222.7L584.8,220.5L582.7,220.9L581.8,221.4L580.5,221.1L580.7,219.1L580.1,217.1L577.8,214.8L577.1,212.7L573.4,213.5L572.0,213.6L570.7,214.4L570.6,215.4L568.0,216.4L566.7,218.1L564.4,220.3L561.7,221.8L561.6,224.5L561.2,226.5L561.1,228.7L560.0,230.1L558.9,230.6L558.0,231.7L556.6,230.5L555.7,227.1L554.4,225.1L553.8,222.7L552.6,221.1L551.7,217.1L551.5,214.4L551.3,213.4L550.9,214.4L549.1,214.8L546.6,212.7L547.9,212.3L547.5,211.9L544.4,210.4L543.5,209.1L540.6,208.8L536.7,208.8L533.2,208.6L530.9,208.0L530.3,206.3L527.6,207.1L525.2,206.4L523.2,205.2L521.1,202.2L519.8,201.8L519.3,202.6L518.3,202.4L519.0,204.4L519.8,205.8L521.3,207.1L521.4,208.2L522.2,209.4L522.5,207.8L523.2,207.8L523.3,209.1L522.9,209.8L523.3,210.2L525.2,210.2L527.2,209.8L529.3,207.8L530.0,209.8L532.7,211.0L534.3,212.4L531.6,217.1L529.9,218.5L528.2,219.3L525.3,220.2L524.1,221.7L519.8,223.8L514.5,225.4L512.4,225.7L511.5,222.5L511.4,220.6L509.8,218.5L508.4,216.0L506.6,213.8L505.8,211.1L504.0,209.4L503.1,207.8L500.3,204.9L500.1,205.4L499.1,204.4L497.9,202.6L497.9,203.8L500.4,208.4L502.0,210.6L503.6,213.1L504.1,214.4L504.0,216.4L505.9,218.5L507.1,221.8L509.4,223.1L511.9,225.5L512.2,227.1L513.8,228.6L517.1,227.5L519.8,227.4L522.6,226.6L522.9,228.5L520.9,232.5L518.5,236.5L515.8,239.6L513.1,241.2L510.4,243.8L509.9,244.8L508.0,246.1L506.7,248.8L506.2,250.5L507.1,251.9L506.8,253.9L508.3,256.4L508.6,259.2L508.6,262.5L506.4,264.9L503.7,266.3L501.1,269.0L501.7,271.9L501.6,274.6L498.4,276.3L498.3,278.3L497.7,280.6L495.7,282.4L494.4,284.3L492.4,286.2L490.4,287.5L488.6,287.9L485.0,288.1L481.0,289.0L479.0,288.3L478.7,286.2L478.7,284.6L476.3,280.7L474.6,278.4L473.6,273.0L470.3,266.8L470.0,265.6L470.3,262.5L472.3,259.2L472.7,256.8L471.6,254.5L470.7,250.6L470.0,248.6L467.1,245.7L466.0,243.6L466.9,242.2L467.3,241.2L467.3,238.1L466.9,237.2L465.6,236.2L462.2,236.8L460.1,234.1L457.8,233.9L455.8,234.4L451.5,236.2L450.0,235.7L444.2,236.6L442.1,235.8L438.8,233.3L437.5,232.6L436.4,230.5L434.1,227.8L431.8,226.1L431.7,225.0L434.1,224.7L434.1,224.1L431.7,224.3L430.8,222.9L432.1,221.0L432.8,218.5L432.1,216.6L432.5,215.4L431.4,214.0ZM517.8,185.1L520.5,188.3L521.6,188.7L520.3,189.9L519.7,191.2L520.1,192.4L523.8,193.6L526.4,193.1L525.2,189.7L525.2,188.1L524.5,185.3L522.5,183.0L521.6,183.3L522.9,182.0L525.2,182.0L525.2,180.0L522.5,179.7L519.8,180.6L517.8,181.7L517.8,185.1ZM506.7,250.2L507.2,250.8L506.8,251.1L506.7,250.2ZM602.3,215.6L602.8,216.3L601.5,217.9L600.2,218.1L599.7,216.8L600.8,215.8L602.3,215.6ZM492.0,193.9L491.7,194.5L491.3,194.1L492.0,193.9ZM456.1,174.2L452.2,174.8L449.5,175.4L446.6,175.7L448.6,174.1L449.9,173.8L447.2,173.2L448.7,172.6L448.2,171.3L450.2,171.2L449.5,169.2L447.6,169.4L447.8,168.4L446.6,168.6L445.9,166.7L446.4,165.7L447.5,164.2L450.2,164.2L448.6,165.7L449.5,165.4L451.8,165.5L451.4,166.2L449.8,167.7L450.9,167.7L452.1,168.4L452.6,169.6L454.2,170.9L454.6,171.7L456.5,172.1L455.5,173.3L456.1,174.2ZM445.9,165.9L444.4,166.1L444.8,165.0L445.8,164.3L445.9,165.9ZM485.3,164.2L484.5,165.0L483.5,164.6L483.7,164.2L485.3,164.2ZM484.5,163.9L483.9,163.7L485.0,163.7L484.5,163.9ZM470.9,167.7L471.1,168.5L470.3,169.2L468.9,168.8L469.1,168.1L470.9,167.7ZM535.2,149.2L533.2,149.4L533.9,148.7L535.2,149.2ZM466.1,237.6L465.8,238.2L465.6,238.1L466.1,237.6ZM693.9,264.5L695.2,264.1L694.6,264.9L693.9,264.5ZM693.2,147.6L693.9,147.0L695.2,147.0L695.2,147.8L693.2,147.6ZM693.2,265.9L693.3,266.7L691.9,266.8L691.6,266.3L693.2,265.9ZM688.8,298.1L688.1,297.7L688.5,295.9L686.9,295.0L688.0,293.3L688.1,291.9L685.8,289.3L685.4,288.5L687.6,289.7L689.2,291.3L689.9,292.6L693.2,292.9L692.5,294.6L691.2,295.3L689.9,297.7L688.8,298.1ZM687.7,244.9L688.1,244.6L688.0,245.0L687.7,244.9ZM677.1,304.0L679.2,301.7L682.5,299.9L683.8,298.3L684.5,297.1L685.4,296.6L687.5,297.5L687.2,298.6L685.6,300.6L683.6,301.7L682.9,303.8L681.2,304.8L679.6,304.8L677.1,304.0ZM686.0,240.8L685.7,240.8L686.1,240.5L686.0,240.8ZM683.2,233.1L683.7,232.9L683.4,233.1L683.2,233.1ZM679.4,266.3L679.4,265.9L679.8,266.3L679.4,266.3ZM678.9,305.6L678.6,305.0L679.4,305.2L678.9,305.6ZM678.3,264.0L678.9,264.5L678.3,264.5L678.3,264.0ZM673.8,269.4L677.1,271.8L677.8,272.4L675.1,271.0L673.8,269.4ZM677.5,263.5L677.4,262.5L678.1,263.3L677.5,263.5ZM676.5,168.6L677.1,169.3L676.2,169.0L676.5,168.6ZM672.6,235.3L672.5,235.6L672.3,235.6L672.6,235.3ZM671.5,256.8L670.6,256.8L670.2,256.3L671.5,256.8ZM669.4,253.7L670.2,255.1L669.6,254.5L669.4,253.7ZM668.2,254.9L669.5,255.6L668.4,255.6L668.2,254.9ZM666.4,252.7L668.2,253.7L667.1,253.5L666.4,252.7ZM665.9,233.4L666.3,233.1L666.2,233.5L665.9,233.4ZM665.1,252.3L664.2,252.1L663.8,251.5L665.1,252.3ZM660.4,177.0L661.1,176.4L662.8,175.0L660.4,177.0ZM661.3,249.8L662.8,251.5L662.1,251.5L661.3,249.8ZM624.3,261.1L626.3,262.3L627.7,262.4L628.3,259.9L629.3,259.1L631.6,257.9L635.0,258.8L637.4,258.8L636.3,260.5L635.6,262.3L638.3,263.9L641.0,265.9L642.7,266.0L643.7,262.5L643.8,259.6L645.0,256.9L646.7,261.7L648.8,262.5L649.0,264.5L650.0,267.6L653.7,269.9L656.0,272.7L657.1,274.6L659.1,276.6L659.7,279.2L659.7,281.0L659.1,283.9L656.7,287.9L655.3,290.6L654.9,292.6L651.7,293.3L650.1,294.7L648.1,293.7L646.3,294.3L643.7,293.7L641.7,292.6L641.0,290.6L639.7,290.1L639.7,289.0L638.7,289.5L638.3,287.9L638.8,286.3L636.3,289.0L635.8,289.1L633.9,286.3L630.9,285.3L626.9,284.7L622.9,285.7L620.2,286.6L619.6,287.8L614.9,287.8L612.2,289.3L609.5,289.3L608.2,288.3L609.1,285.3L608.2,283.2L606.2,277.2L606.0,274.6L606.4,272.6L607.1,271.6L609.5,270.3L613.5,269.2L616.9,267.9L618.0,265.5L619.6,265.6L622.2,261.9L624.3,261.1ZM656.1,246.0L658.4,247.6L659.1,248.8L657.7,247.2L656.1,246.0ZM658.0,248.2L657.1,249.8L655.0,250.9L653.0,250.5L653.0,250.0L655.7,249.8L658.0,248.2ZM657.6,232.7L657.3,232.7L657.7,232.5L657.6,232.7ZM639.0,141.0L652.4,141.0L655.0,142.0L649.7,141.9L640.3,142.7L637.6,141.9L639.0,141.0ZM643.0,254.7L641.5,253.3L640.1,253.7L638.4,253.7L639.1,251.9L639.9,250.5L636.3,248.6L633.6,247.7L632.0,248.0L630.9,246.4L633.0,245.8L631.3,245.6L629.6,244.5L629.6,243.6L631.6,243.0L633.6,243.6L633.9,245.8L635.6,246.9L637.6,244.9L639.0,244.6L645.7,247.0L647.7,247.6L651.0,250.5L652.1,251.2L651.3,251.9L654.4,255.2L655.7,256.3L653.7,256.3L651.7,255.9L650.4,254.4L647.7,252.8L646.3,253.6L645.0,254.8L643.0,254.7ZM649.7,183.0L653.0,181.7L655.1,180.8L652.4,182.4L649.7,183.0ZM650.4,297.4L652.8,297.1L652.8,298.9L651.7,300.3L649.7,300.7L648.6,299.3L648.0,296.9L650.4,297.4ZM629.6,197.2L630.9,198.4L630.1,200.5L629.1,201.0L628.5,199.5L627.9,198.4L628.3,197.6L629.6,197.2ZM629.6,197.1L629.6,196.5L631.3,195.3L633.0,195.1L635.6,194.9L637.4,192.8L638.0,193.3L639.7,192.5L641.0,191.1L641.7,189.3L641.7,188.0L643.0,187.1L644.3,189.7L643.0,191.3L643.0,193.2L642.6,194.7L641.7,195.7L640.3,195.9L639.2,196.3L637.6,196.3L636.3,197.7L635.4,197.6L635.0,196.5L632.3,196.7L630.9,197.2L629.6,197.1ZM634.0,196.7L634.6,197.3L633.6,198.0L632.3,198.7L631.5,198.4L631.5,197.6L634.0,196.7ZM643.0,186.8L641.7,187.1L642.1,186.1L641.4,185.6L642.3,184.7L643.7,184.7L643.9,181.8L645.7,183.2L648.8,183.3L649.0,184.7L647.0,185.2L646.1,186.4L644.1,185.6L643.0,185.9L643.0,186.8ZM647.8,224.9L648.4,224.3L648.2,224.9L647.8,224.9ZM644.1,173.0L644.3,170.0L645.7,171.7L646.1,174.4L647.7,177.0L645.7,179.7L646.3,180.4L644.3,181.0L644.3,175.7L644.1,173.0ZM641.7,144.3L644.3,143.8L645.7,144.6L641.7,144.3ZM638.8,229.9L639.4,229.7L639.1,230.1L638.8,229.9ZM638.0,169.3L639.2,169.0L638.7,169.7L638.0,169.3ZM638.4,290.1L639.1,290.5L637.4,290.6L637.1,290.2L638.4,290.1ZM637.1,261.5L637.0,260.9L637.5,261.2L637.1,261.5ZM634.2,232.7L634.6,232.2L634.4,232.7L634.2,232.7ZM633.9,250.5L634.7,250.8L634.2,251.6L633.9,250.5ZM629.9,253.2L629.5,252.7L630.5,252.3L629.9,253.2ZM627.6,247.2L625.6,247.0L625.6,246.5L629.3,246.9L627.6,247.2ZM629.3,258.3L628.7,257.7L630.0,257.6L629.3,258.3ZM628.9,202.2L628.8,202.0L629.2,201.9L628.9,202.2ZM627.5,205.0L627.3,204.7L627.9,204.4L627.5,205.0ZM625.2,207.6L625.5,207.1L626.0,206.7L625.2,207.6ZM624.9,241.8L624.9,240.1L625.6,239.8L626.3,241.2L625.5,243.2L624.9,241.8ZM623.6,247.6L622.9,246.8L624.5,247.0L623.6,247.6ZM621.4,255.3L620.9,256.1L619.6,256.3L620.9,254.8L624.3,253.7L623.6,254.5L621.4,255.3ZM623.2,198.0L624.1,197.7L623.7,198.1L623.2,198.0ZM619.6,231.0L622.0,229.5L623.3,231.4L623.6,233.4L622.1,235.0L620.2,233.8L619.6,232.3L617.6,233.1L619.6,231.0ZM617.4,223.9L615.7,224.1L615.7,223.0L614.9,221.8L615.3,220.5L615.5,217.8L617.6,217.9L618.0,219.8L616.9,221.4L617.2,223.4L620.0,224.1L620.4,225.7L617.4,223.9ZM620.6,225.8L622.0,226.1L622.4,227.7L621.6,227.5L620.6,225.8ZM621.6,227.9L621.6,229.0L621.0,228.5L620.8,227.3L621.6,227.9ZM618.8,247.8L618.0,248.9L616.9,247.8L616.2,246.1L615.3,246.5L615.4,249.8L614.2,249.8L614.1,247.2L613.3,246.2L614.5,242.6L614.9,240.9L616.2,240.9L618.9,241.3L621.6,240.4L620.8,242.0L616.9,241.8L615.3,243.7L619.3,243.7L617.6,244.9L618.8,247.8ZM619.2,230.2L618.4,229.8L618.2,229.1L619.3,228.1L619.2,230.2ZM619.4,227.9L620.2,227.5L619.7,229.1L619.4,227.9ZM617.6,228.5L617.6,226.7L618.9,227.1L617.6,228.5ZM618.6,254.1L614.9,254.4L614.7,253.9L616.9,253.9L618.8,253.5L618.6,254.1ZM616.0,213.1L615.0,211.8L616.2,209.1L617.4,209.0L616.9,211.1L616.0,213.1ZM616.8,224.6L616.6,226.1L616.0,225.7L615.4,224.6L616.8,224.6ZM614.9,256.3L613.5,255.2L616.0,255.9L614.9,256.3ZM611.1,231.3L613.5,228.7L612.6,230.1L611.1,231.3ZM601.0,239.8L602.8,240.5L603.4,239.2L605.5,238.2L606.8,236.4L608.6,236.0L610.6,233.1L613.8,235.4L612.2,236.8L611.5,236.9L612.2,239.6L611.9,241.2L613.4,241.2L611.5,243.6L610.2,244.5L609.8,247.2L607.6,248.0L605.5,246.8L603.8,246.9L601.8,246.4L601.5,244.2L600.3,242.9L600.2,240.8L601.0,239.8ZM608.5,254.3L608.2,253.5L609.1,253.7L608.5,254.3ZM609.9,254.4L609.5,253.7L610.5,253.9L609.9,254.4ZM610.6,253.9L612.2,253.5L613.5,253.9L612.2,254.4L610.6,253.9ZM595.1,251.6L596.1,250.4L599.5,251.2L602.6,251.1L605.2,251.7L607.5,252.9L607.4,254.1L596.8,252.4L595.1,251.6ZM595.9,250.2L594.1,250.2L591.2,247.8L588.8,245.2L587.0,242.1L584.4,238.5L582.1,236.1L581.8,235.0L584.8,235.6L586.4,237.4L588.5,239.4L590.1,240.1L592.1,241.4L594.1,244.9L596.1,246.5L595.9,250.2ZM598.5,246.8L598.4,246.1L599.1,246.5L598.5,246.8ZM581.4,135.4L596.1,136.6L598.8,137.6L593.5,138.6L584.1,138.3L578.7,136.6L581.4,135.4ZM596.1,245.2L597.1,246.2L595.9,245.4L596.1,245.2ZM586.4,243.8L587.0,244.8L586.5,244.6L586.4,243.8ZM584.4,240.8L584.8,240.6L585.3,241.4L584.4,240.8ZM561.7,229.4L563.9,232.7L563.5,233.9L562.1,234.6L561.3,234.1L561.1,232.1L561.1,229.5L561.7,229.4ZM535.9,142.3L532.5,143.6L529.2,145.6L531.2,148.0L525.8,148.0L523.2,147.0L523.2,146.3L525.2,145.0L527.8,143.6L530.5,141.9L537.2,140.6L545.3,139.6L546.6,140.0L541.2,141.0L535.9,142.3ZM531.1,269.2L531.6,269.5L531.2,269.9L531.1,269.2ZM528.2,270.4L528.9,270.7L528.5,271.1L528.2,270.4ZM528.5,248.9L528.4,248.6L528.6,248.8L528.5,248.9ZM526.5,226.1L525.7,225.7L527.0,225.7L526.5,226.1ZM512.2,271.9L513.5,269.2L513.1,265.9L513.8,264.1L516.2,263.5L518.2,262.0L520.2,258.5L521.8,263.2L520.7,263.9L520.5,265.9L518.2,273.2L517.1,275.9L514.7,276.7L512.7,274.6L512.2,271.9ZM518.9,149.8L520.5,149.6L521.1,150.4L518.5,150.3L518.9,149.8ZM514.6,259.9L514.6,259.5L514.9,259.7L514.6,259.9ZM513.7,259.1L513.5,258.8L513.9,258.9L513.7,259.1ZM507.4,249.7L507.4,249.2L507.6,249.6L507.4,249.7ZM499.7,195.7L498.4,196.3L497.4,195.7L498.4,195.2L500.5,194.8L499.7,195.7ZM489.4,195.5L487.4,195.9L485.7,195.5L485.7,195.1L489.4,195.5ZM478.6,166.3L479.6,165.1L479.4,165.9L478.6,166.3ZM476.2,167.4L477.1,165.9L476.6,166.9L476.2,167.4ZM473.5,194.7L473.3,194.4L473.7,194.5L473.5,194.7ZM466.5,187.5L467.3,188.4L467.1,190.1L466.1,190.5L465.4,190.1L465.4,188.4L465.2,187.7L466.5,187.5ZM466.5,187.2L465.8,186.7L465.7,185.9L466.8,185.1L466.9,186.4L466.5,187.2ZM462.9,242.4L463.0,242.0L463.3,242.1L462.9,242.4ZM457.4,189.7L458.5,189.2L458.6,189.9L457.9,190.0L457.4,189.7ZM455.9,190.5L456.3,190.3L456.2,190.7L455.9,190.5ZM452.1,162.3L452.1,161.8L452.6,161.4L452.9,162.1L452.1,162.3ZM450.6,163.7L449.8,163.8L450.0,163.4L450.6,163.7ZM444.4,168.8L446.2,168.8L446.8,169.7L445.9,170.4L446.2,171.7L445.6,172.8L442.8,173.7L440.8,173.6L440.8,172.4L441.5,171.3L440.8,170.1L442.8,170.0L442.8,169.0L444.4,168.8ZM381.2,149.0L381.2,147.0L379.9,145.6L378.5,143.6L375.9,141.6L371.2,140.7L363.1,141.0L359.1,139.6L356.5,138.0L363.1,136.3L371.2,133.6L380.6,132.5L391.3,132.1L400.6,131.2L411.4,130.8L420.7,131.6L426.1,132.5L422.8,133.3L422.8,133.5L434.1,133.2L438.1,133.9L431.4,135.6L429.4,137.6L428.1,139.6L429.4,141.6L426.8,143.0L424.7,145.0L424.1,147.0L424.7,148.6L420.8,148.7L423.4,149.6L419.4,151.0L414.0,151.7L406.0,154.3L403.3,154.9L400.6,155.7L399.3,157.7L397.3,159.7L396.6,161.7L395.3,162.5L392.6,161.3L389.3,160.3L387.2,158.3L385.2,156.7L382.6,153.0L383.2,151.0L385.9,149.6L381.2,149.0ZM436.1,203.5L435.6,204.7L435.1,205.1L435.6,204.2L436.1,203.5ZM422.1,155.8L424.4,155.3L421.4,155.0L424.1,153.8L427.4,154.2L430.1,154.1L432.8,153.7L434.8,153.9L436.1,155.7L434.1,156.6L429.4,157.8L426.8,157.7L423.8,157.3L424.7,156.3L422.1,155.8ZM433.0,205.0L433.6,204.8L433.6,205.4L433.0,205.0ZM432.1,205.1L431.6,204.7L432.5,204.4L432.1,205.1ZM430.4,204.4L430.1,204.2L430.2,203.9L430.4,204.4ZM422.5,222.5L422.9,222.2L422.7,222.6L422.5,222.5ZM422.1,220.5L421.7,220.3L422.2,220.1L422.1,220.5ZM420.7,219.9L420.5,219.8L420.9,219.7L420.7,219.9ZM233.5,169.6L235.9,169.0L240.0,167.7L243.3,165.7L244.0,163.9L237.3,164.2L237.3,162.5L234.6,162.5L233.3,161.7L231.9,160.3L232.6,159.7L234.6,158.3L238.6,157.7L238.6,156.3L231.3,156.2L229.1,154.9L234.6,153.7L237.1,153.8L237.1,153.7L235.0,153.0L234.6,152.2L230.9,151.3L231.7,150.4L241.3,147.9L244.6,147.2L255.4,148.4L262.1,148.8L265.4,149.5L268.1,149.6L272.1,150.4L276.1,149.6L280.8,149.0L282.8,148.3L286.8,149.6L288.2,149.0L292.2,149.2L297.5,150.3L300.2,151.7L301.6,151.9L309.6,151.7L309.6,153.0L312.3,151.3L317.6,151.9L323.0,151.9L324.7,150.7L321.0,150.3L323.0,149.1L325.7,149.5L325.7,147.0L327.7,146.3L331.0,148.3L331.0,149.6L333.0,151.0L339.0,150.3L339.7,149.2L340.7,149.2L340.7,149.0L337.0,148.6L334.4,147.6L333.7,146.3L335.0,144.7L339.0,143.9L345.7,144.0L346.4,145.2L349.7,145.2L349.7,145.0L346.4,144.7L349.1,143.9L352.4,144.4L350.9,145.2L355.1,146.6L362.5,148.6L364.5,149.9L362.5,151.0L367.2,151.9L371.9,153.4L367.2,158.3L367.2,159.8L363.1,159.3L359.1,158.3L356.5,156.6L354.4,156.3L350.4,156.6L349.8,156.3L350.4,155.3L355.1,155.0L355.8,153.7L357.1,152.3L355.8,151.0L349.1,149.6L348.4,148.6L344.3,149.0L345.1,151.0L343.7,153.7L340.4,153.9L338.4,154.7L338.4,154.9L341.7,154.3L346.4,157.3L343.1,158.1L339.7,157.7L337.7,157.0L337.7,155.0L336.4,157.0L332.4,157.3L329.7,159.7L327.7,162.3L327.7,163.9L330.3,166.3L333.7,166.3L336.4,167.0L340.4,168.6L343.7,168.8L344.0,171.5L343.8,171.5L345.7,173.7L347.3,174.1L348.4,173.0L348.7,170.4L347.7,169.4L350.4,168.4L351.5,166.3L349.1,163.9L350.4,162.3L349.8,159.3L353.8,159.3L360.5,161.0L361.1,163.7L363.1,164.6L365.8,163.9L367.7,161.8L370.5,164.7L371.9,167.0L373.9,168.6L376.5,169.7L378.5,171.7L379.5,173.0L373.9,175.4L369.8,175.3L365.2,175.4L362.5,177.0L360.7,178.8L364.5,177.0L367.8,177.0L368.1,177.8L365.8,178.4L367.2,179.7L367.8,180.6L368.9,181.1L368.5,180.2L371.2,180.5L370.3,181.2L371.9,181.4L373.9,180.0L374.1,181.0L372.5,182.1L369.2,182.9L366.5,184.4L365.6,183.3L367.8,182.0L364.5,182.2L362.5,183.3L360.5,184.1L359.5,185.1L359.4,185.7L360.5,186.4L359.7,187.1L358.5,187.2L355.8,187.9L355.1,188.4L354.8,189.6L353.8,190.5L353.6,191.3L352.6,192.9L352.6,193.7L353.1,195.3L348.2,198.1L346.0,199.6L345.2,201.5L345.5,202.7L346.5,204.6L347.2,206.7L346.9,208.7L345.9,209.2L344.4,207.9L343.1,205.4L343.1,203.8L341.9,202.6L341.3,202.4L339.8,202.8L338.4,201.9L334.8,202.0L334.5,203.6L333.0,203.6L331.3,203.1L328.6,202.8L327.3,203.4L325.1,204.6L323.9,205.8L324.0,207.9L323.6,209.1L323.2,212.4L323.9,214.4L325.1,216.4L325.9,217.4L327.7,218.2L330.3,217.7L331.7,217.7L332.8,216.4L333.2,214.4L335.7,213.8L337.7,213.8L338.0,214.7L337.0,216.4L336.8,218.1L336.0,217.8L336.2,219.1L335.2,221.3L336.1,221.5L339.0,221.1L341.1,221.3L342.8,222.5L342.1,227.8L343.6,229.7L345.7,230.7L347.7,229.7L350.6,230.9L351.4,231.8L352.4,230.1L353.1,228.3L354.0,227.7L356.1,227.4L357.5,226.2L358.7,225.9L358.3,227.8L358.4,228.1L360.2,227.0L360.7,226.2L361.1,227.1L362.9,227.8L363.1,228.5L365.8,228.3L367.8,229.0L370.5,228.2L370.1,229.1L372.5,229.8L372.8,231.0L373.9,231.1L375.9,232.7L377.6,234.6L379.5,234.6L381.9,234.9L383.5,235.4L385.9,237.8L386.6,239.8L387.2,241.2L386.8,242.1L387.9,242.8L389.3,244.5L389.9,243.4L392.6,243.8L394.5,244.8L395.3,245.8L398.0,246.2L400.6,246.2L402.6,247.4L404.7,248.9L406.9,249.6L407.6,252.1L407.3,253.9L406.0,255.9L404.3,257.5L402.6,259.9L402.0,261.2L402.0,264.5L399.3,271.9L398.0,273.1L396.0,273.2L391.9,274.6L389.9,276.2L389.3,277.9L388.9,280.6L386.6,283.2L384.3,285.3L381.9,288.6L380.6,289.1L378.5,289.0L376.8,288.5L376.0,287.8L375.9,288.3L377.6,289.9L378.3,291.3L376.9,293.5L372.5,294.6L370.9,294.3L370.8,297.0L367.2,297.0L368.1,299.0L366.8,300.6L366.5,302.6L363.8,304.0L365.8,306.0L361.8,310.0L362.6,312.4L360.5,312.6L359.3,313.3L358.5,314.4L355.1,312.6L353.4,310.0L354.4,307.3L353.1,305.3L355.8,301.3L356.7,298.6L355.8,298.4L355.6,300.5L354.6,300.2L355.1,298.5L355.4,298.4L356.1,295.3L355.8,292.2L357.0,289.9L358.3,285.3L358.5,281.2L359.8,277.2L359.7,273.9L360.2,269.9L359.9,267.0L358.5,265.6L353.5,262.9L352.0,260.9L348.4,253.5L347.2,251.6L345.5,250.5L345.3,248.5L347.3,246.2L345.9,245.6L346.0,243.8L346.9,242.5L347.1,241.4L348.7,240.6L349.1,239.2L350.4,237.2L350.7,235.2L350.4,233.4L348.7,231.4L346.7,232.7L342.1,231.0L340.4,229.5L339.3,228.9L339.4,227.7L336.8,225.3L337.3,225.1L336.8,224.9L335.7,224.9L333.6,224.1L332.4,223.9L330.7,223.1L329.0,221.4L327.3,220.9L325.0,221.5L322.3,220.7L317.9,218.7L315.6,218.1L313.6,216.4L312.9,215.1L313.2,213.8L312.3,212.2L308.5,208.7L307.7,207.1L304.9,204.4L303.6,202.8L302.5,200.8L300.6,200.1L300.6,201.8L305.2,207.8L306.2,209.8L307.6,211.5L306.9,211.9L305.6,210.4L304.0,209.4L303.8,207.8L301.8,206.7L300.5,205.4L301.3,204.4L299.5,202.7L298.5,201.1L297.1,198.3L295.7,197.3L294.2,196.7L292.7,196.3L291.0,193.6L290.2,192.0L287.6,188.5L287.9,186.7L287.5,185.3L288.2,182.9L288.2,180.6L287.2,177.8L287.9,177.6L286.2,177.2L282.4,174.8L283.7,174.5L284.4,174.8L282.8,172.4L280.8,171.0L279.7,169.7L280.0,168.6L278.8,169.3L277.5,169.0L274.8,167.7L272.8,166.3L271.4,165.0L270.1,164.2L267.4,163.0L264.7,162.5L261.4,162.3L258.7,161.3L255.4,162.3L251.3,163.3L253.3,160.7L250.7,161.7L248.9,163.3L248.0,164.6L242.0,167.7L237.3,169.0L233.5,169.6ZM289.5,176.6L284.9,174.7L284.8,175.0L286.6,175.7L288.8,177.2L289.2,177.0L289.5,176.6ZM344.4,171.6L345.7,171.4L346.7,172.0L344.4,171.6ZM367.8,175.8L371.4,176.9L369.8,176.6L367.8,175.8ZM360.1,313.0L362.3,312.9L364.5,314.4L366.9,315.6L365.2,316.0L362.3,315.8L360.5,316.4L357.8,315.3L359.8,314.6L360.1,313.0ZM331.0,145.9L326.3,146.0L326.3,143.9L331.0,143.6L333.0,144.3L331.0,145.9ZM298.2,150.3L296.9,148.3L300.6,148.2L300.6,148.0L295.5,147.2L296.2,145.6L301.6,144.6L306.9,145.2L309.6,144.7L313.6,145.6L313.6,147.6L317.6,149.0L319.0,149.6L313.6,150.6L306.9,150.9L302.2,151.0L298.2,150.3ZM383.0,180.1L381.2,179.7L379.9,179.8L379.2,178.9L374.8,178.9L375.9,177.7L377.5,174.8L379.3,173.6L379.9,175.0L378.5,176.0L381.9,176.5L382.6,177.7L383.6,178.9L383.0,180.1ZM374.4,224.9L374.5,224.7L374.7,225.0L374.4,224.9ZM372.3,222.8L372.5,222.6L372.7,223.1L372.3,222.8ZM372.5,223.7L372.7,224.2L372.4,223.9L372.5,223.7ZM371.6,228.2L372.5,228.1L372.5,229.0L371.4,229.0L371.6,228.2ZM371.9,221.1L371.6,220.7L372.3,220.9L371.9,221.1ZM329.0,142.6L325.0,142.3L325.7,141.4L325.7,140.2L331.0,139.6L335.0,140.4L335.0,139.0L337.7,137.9L339.0,136.3L337.7,135.0L333.6,133.9L337.0,136.3L332.4,137.9L327.0,137.6L325.7,135.6L328.3,134.3L333.6,134.0L332.4,133.6L337.7,132.4L347.1,131.5L357.8,131.5L368.5,132.0L371.2,132.9L365.8,134.6L357.8,135.9L353.8,137.2L351.1,139.0L347.1,140.7L345.2,140.6L347.7,141.6L347.1,142.7L339.0,143.0L331.0,142.8L329.0,142.4L329.0,142.6ZM364.2,217.8L366.2,217.8L366.2,218.5L364.2,218.5L364.2,217.8ZM361.5,316.8L363.4,316.2L364.5,317.2L361.5,316.8ZM356.1,215.9L360.7,216.6L362.7,217.4L362.5,218.1L359.8,218.1L358.1,218.5L354.6,217.7L357.1,217.1L356.1,215.9ZM355.5,214.3L356.1,214.0L356.3,214.4L355.5,214.3ZM350.8,214.8L349.1,213.8L345.7,213.0L343.7,212.3L341.7,213.1L340.5,213.2L343.1,211.8L346.4,211.5L349.8,212.7L352.7,214.4L354.8,215.4L353.1,215.9L350.2,215.9L350.8,214.8ZM352.0,209.4L353.4,210.0L353.1,210.2L352.0,209.4ZM349.4,217.9L352.0,218.2L352.0,218.6L350.0,218.7L349.4,217.9ZM350.8,207.8L350.0,207.1L349.4,207.0L349.9,206.7L350.8,207.8ZM350.2,210.0L349.9,210.4L349.2,209.5L349.5,209.0L350.2,210.0ZM343.1,158.6L345.1,158.5L347.1,159.4L346.8,159.5L348.0,160.1L347.1,160.2L346.6,159.3L343.1,158.6ZM324.3,137.6L320.3,138.6L313.6,138.3L314.9,137.0L320.3,136.6L324.3,137.6ZM323.6,144.3L324.3,145.6L321.6,147.0L317.6,146.3L317.6,145.0L319.6,143.9L323.6,144.3ZM323.6,141.2L320.3,142.3L314.9,142.0L316.3,140.3L321.6,140.0L323.6,141.2ZM304.2,140.6L309.6,140.3L312.9,141.6L309.6,142.6L302.9,143.0L297.5,142.0L298.9,140.3L304.2,140.6ZM298.9,139.9L294.9,141.2L289.5,141.0L290.8,139.6L296.2,138.8L298.9,139.9ZM288.2,143.9L292.2,143.0L296.2,143.2L298.9,143.9L295.5,145.2L293.5,147.0L289.5,147.5L286.2,146.3L288.2,143.9ZM276.1,170.4L277.7,170.4L278.5,172.8L276.1,170.4ZM254.0,266.3L253.9,265.9L254.4,266.1L254.0,266.3ZM250.4,165.7L247.3,166.1L248.3,165.0L250.0,164.6L250.4,165.7ZM245.4,217.0L245.3,215.8L246.4,215.5L246.7,216.4L245.4,217.0ZM244.4,214.6L245.0,214.4L245.3,214.8L244.4,214.6ZM243.0,214.0L242.4,213.9L242.6,213.5L243.0,214.0ZM240.9,213.2L240.4,213.1L240.8,212.8L240.9,213.2ZM231.3,161.9L232.5,162.3L230.6,162.6L231.3,161.9ZM226.6,157.4L228.2,158.1L225.9,158.3L224.2,157.8L226.6,157.4ZM213.2,150.3L215.9,151.0L219.9,152.3L225.2,153.3L227.0,154.2L223.2,156.3L219.9,155.9L215.9,155.0L213.2,155.7L213.2,150.3ZM224.0,261.1L224.6,261.2L224.2,261.3L224.0,261.1ZM223.0,260.5L223.6,260.7L223.2,260.9L223.0,260.5ZM219.6,271.0L219.5,270.7L219.9,270.8L219.6,271.0ZM213.2,147.8L213.2,147.0L215.9,147.0L216.5,147.5L213.2,147.8Z"/>
<defs><linearGradient id="lg" x1="0" x2="1" y1="0" y2="0"><stop offset="0" stop-color="#ffffff"/><stop offset="0.45" stop-color="#7ab87a"/><stop offset="1" stop-color="#0b5a0b"/></linearGradient></defs>
<rect x="200.3" y="368.3" width="109.2" height="15" fill="url(#lg)"/>
<g fill="#124c12"><rect x="208" y="122.5" width="13" height="41.2" rx="6.5"/><rect x="200.5" y="136.5" width="28.2" height="14" rx="7"/><rect x="208" y="167.5" width="12.4" height="40.2" rx="5.5"/></g>
<g fill="#fff"><path d="M214.4,125.3L218.8,132.8L210,132.8Z"/><path d="M214.4,161.4L218.8,154.8L210,154.8Z"/><path d="M203.8,143.5L209.6,139.3L209.6,147.7Z"/><path d="M224.9,143.5L218.7,139.3L218.7,147.7Z"/>
<rect x="210.3" y="174.2" width="8.4" height="2.2"/><rect x="213.4" y="171.2" width="2.2" height="8.2"/><rect x="210.3" y="200.3" width="8.4" height="2.2"/></g>
<g><circle cx="214.5" cy="188" r="6.8" fill="#e4e4f7"/><g fill="none" stroke="#6f6fc4" stroke-width="0.8"><circle cx="214.5" cy="188" r="6.4"/><ellipse cx="214.5" cy="188" rx="3" ry="6.4"/><path d="M208.1,188H220.9M214.5,181.6V194.4M209,184.8H220M209,191.2H220"/></g></g>
</svg><!--/MAP-->
<div class="abs" style="left:194.6px;top:368.5px;font-size:9px;font-weight:bold;color:#333;line-height:10px">0</div>
<div class="abs" style="left:263.5px;top:368.5px;font-size:9.2px;color:#0f360f;line-height:10px;white-space:nowrap">79,769</div>
<div class="abs hl" style="top:391px"></div>
<div class="abs b11" style="left:202px;top:399.5px;color:#2b2b2b;letter-spacing:-0.1px">Report View by Selection</div>
<div class="abs b11 blue" style="left:663px;top:399.5px;letter-spacing:-0.08px">Customize</div>
<div class="abs hl" style="top:419px"></div>
<div class="abs" style="left:188px;top:420px;width:546px;height:29px;background:#f0f0f0"></div>
<div class="abs" style="left:188px;top:449px;width:546px;height:19px;background:#f8f8f8"></div>
<div class="abs" style="left:188px;top:488px;width:546px;height:25px;background:#f8f8f8"></div>
<div class="abs hl" style="top:468px;background:#ededed"></div>
<div class="abs hl" style="top:487px;background:#ededed"></div>
<div class="abs hl" style="top:513px;background:#ededed"></div>
<div class="abs hl" style="top:532px;background:#e4e4e4"></div>
<div class="abs th" style="left:197px;top:422px;width:28px">Total:</div><div class="abs th" style="left:203.5px;top:434px">4</div>
<div class="abs th" style="left:249px;top:428px">Research Fields</div>
<div class="abs th" style="left:341px;top:422px;width:100px">Web of Science<br>Documents</div>
<div class="abs th" style="left:472.5px;top:428px;color:#2a6fa5">Cites</div>
<div class="abs" style="left:501px;top:432px;width:0;height:0;border-left:3px solid transparent;border-right:3px solid transparent;border-top:4px solid #4a8cc0"></div>
<div class="abs th" style="left:559.5px;top:428px">Cites/Paper</div>
<div class="abs th" style="left:633px;top:422px;width:100px">Highly Cited<br>Papers</div>

<div class="abs num" style="left:171px;top:450.8px">1</div>
<div class="abs fld" style="top:451.8px">CHEMISTRY</div>
<div class="abs num" style="left:375px;top:450.8px">785</div>
<div class="abs num" style="left:483.5px;top:450.8px">11,170</div>
<div class="abs num" style="left:573px;top:450.8px">14.23</div>
<div class="abs bar" style="top:451px"><b style="width:17px"></b><span style="color:#444">3</span></div>

<div class="abs num" style="left:171px;top:470.3px">2</div>
<div class="abs fld" style="top:471.3px">ENGINEERING</div>
<div class="abs num" style="left:375px;top:470.3px">1,183</div>
<div class="abs num" style="left:483.5px;top:470.3px">10,499</div>
<div class="abs num" style="left:573px;top:470.3px">8.87</div>
<div class="abs bar" style="top:470.5px"><b style="width:75px"></b><span style="color:#fff">13</span></div>

<div class="abs num" style="left:171px;top:493.3px">3</div>
<div class="abs fld" style="top:488.8px">MATERIALS<br>SCIENCE</div>
<div class="abs num" style="left:375px;top:493.3px">605</div>
<div class="abs num" style="left:483.5px;top:493.3px">8,913</div>
<div class="abs num" style="left:573px;top:493.3px">14.73</div>
<div class="abs bar" style="top:493.5px"><b style="width:5px"></b><span style="color:#444">1</span></div>

<div class="abs num" style="left:171px;top:516.3px">0</div>
<div class="abs fld" style="top:517.3px">ALL FIELDS</div>
<div class="abs num" style="left:375px;top:516.3px">4,083</div>
<div class="abs num" style="left:483.5px;top:516.3px">45,032</div>
<div class="abs num" style="left:573px;top:516.3px">11.03</div>
<div class="abs bar" style="top:516.5px"><b style="width:75px"></b><span style="color:#fff">38</span></div>
</body></html>
